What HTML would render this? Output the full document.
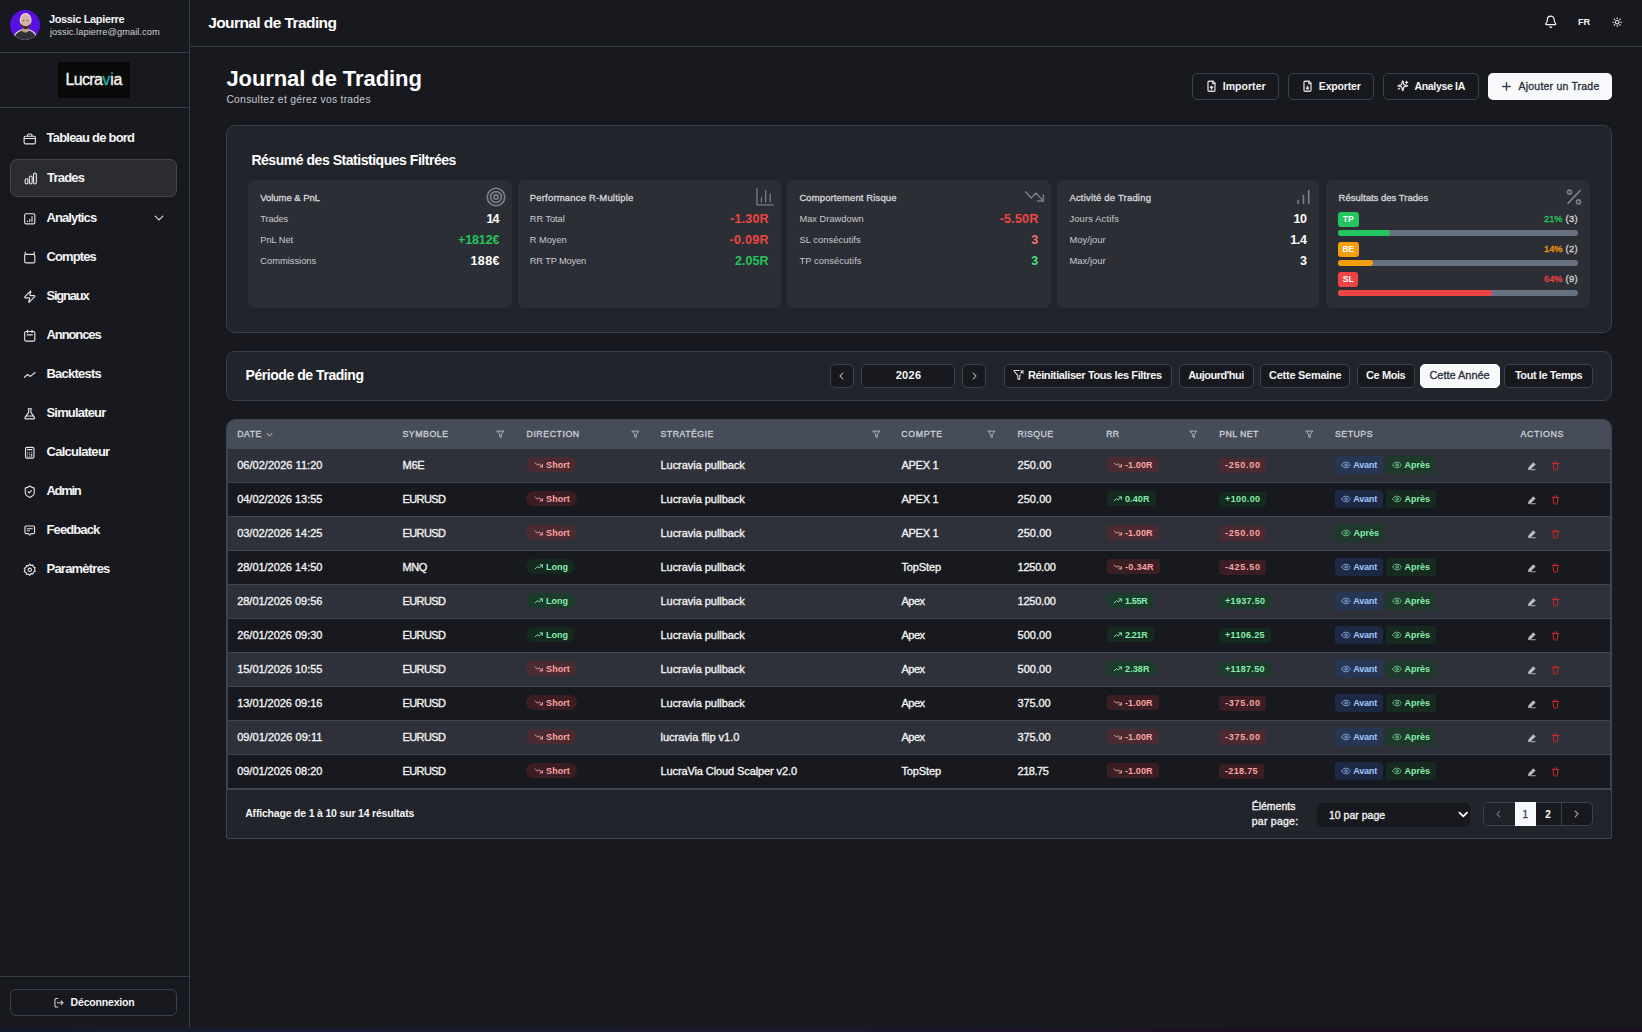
<!DOCTYPE html>
<html lang="fr"><head><meta charset="utf-8"><title>Journal de Trading</title>
<style>
*{box-sizing:border-box;margin:0;padding:0}
html,body{width:1642px;height:1032px;overflow:hidden}
body{background:linear-gradient(90deg,#141a2e 0%,#171a30 20%,#1b182d 50%,#1d0f22 78%,#1c0e20 100%);font-family:"Liberation Sans",sans-serif;color:#fff;position:relative}
.win{position:absolute;left:0;top:0;width:1642px;height:1028px;background:#18191e;overflow:hidden;border-bottom-left-radius:6px}
.abs{position:absolute;white-space:nowrap}
svg.abs{overflow:visible}
</style></head><body><div class="win">
<div class="abs" style="left:189px;top:0px;width:1px;height:1028px;background:#363c48"></div>
<div class="abs" style="left:0px;top:52px;width:189px;height:1px;background:#363c48"></div>
<div class="abs" style="left:0px;top:107px;width:189px;height:1px;background:#363c48"></div>
<div class="abs" style="left:0px;top:976px;width:189px;height:1px;background:#363c48"></div>
<svg class="abs" style="left:10px;top:10px" width="30" height="30" viewBox="0 0 30 30">
<defs><clipPath id="av"><circle cx="15" cy="15" r="15"/></clipPath></defs>
<g clip-path="url(#av)">
<rect width="30" height="30" fill="#5a0fe2"/>
<path d="M1 32 Q3 22.5 11 19.5 L20 19.5 Q27.5 22.5 29.5 32 Z" fill="#f2eef6"/>
<path d="M2 32 Q4 23.5 11.5 20.5 L19.5 20.5 Q26.5 23.5 28.5 32 Z" fill="#323133"/>
<path d="M12.5 15 h6 v6.5 q-3 2 -6 0z" fill="#c59e8a"/>
<ellipse cx="15.6" cy="10.6" rx="5.9" ry="7.6" fill="#f4ece6"/>
<ellipse cx="15.6" cy="10.9" rx="5.1" ry="6.9" fill="#d5b3a3"/>
<path d="M10.5 11.5 Q10.6 18.6 15.6 19.2 Q20.6 18.6 20.7 11.5 Q20 16 15.6 16.3 Q11.2 16 10.5 11.5Z" fill="#3a2a23"/>
<ellipse cx="13.6" cy="10.4" rx="0.9" ry="0.5" fill="#4a3a34"/><ellipse cx="17.6" cy="10.4" rx="0.9" ry="0.5" fill="#4a3a34"/>
</g></svg>
<div class="abs" style="left:49.00px;top:13.69px;font-size:11px;line-height:11px;font-weight:700;letter-spacing:-0.364px;color:#f4f4f5;">Jossic Lapierre</div>
<div class="abs" style="left:50.00px;top:27.73px;font-size:9.3px;line-height:9.3px;font-weight:400;letter-spacing:0.042px;color:#cfd0d4;">jossic.lapierre@gmail.com</div>
<div class="abs" style="left:58px;top:62px;width:72px;height:36px;background:#0a0a0b"></div>
<div class="abs" style="left:65.4px;top:72.3px;font-size:16px;line-height:16px;font-weight:400;-webkit-text-stroke:0.35px #f2f2f2;letter-spacing:-0.62px;color:#f2f2f2">Lucra<span style="color:#19b3a6;-webkit-text-stroke-color:#19b3a6">v</span>ıa</div>
<div class="abs" style="left:110.7px;top:71.7px;width:2.5px;height:2.5px;background:#19b3a6;border-radius:50%"></div>
<div class="abs" style="left:10px;top:159px;width:167px;height:38px;background:#2b2c31;border:1px solid #43454c;border-radius:7px"></div>
<div class="abs" style="left:46.50px;top:131.00px;font-size:13px;line-height:13px;font-weight:700;letter-spacing:-0.778px;color:#f4f4f5;">Tableau de bord</div>
<svg class="abs" style="left:23px;top:131.5px;" width="13.5" height="13.5" viewBox="0 0 24 24" fill="none" stroke="#e4e4e7" stroke-width="2" stroke-linecap="round" stroke-linejoin="round"><rect x="2" y="7.5" width="20" height="13.5" rx="2.5"/><path d="M8 7.5V6Q8 3.5 10.5 3.5h3Q16 3.5 16 6v1.5"/><path d="M2.3 11.5h19.4"/></svg>
<div class="abs" style="left:47.00px;top:171.00px;font-size:13px;line-height:13px;font-weight:700;letter-spacing:-0.777px;color:#f4f4f5;">Trades</div>
<svg class="abs" style="left:24px;top:171.5px;" width="13.5" height="13.5" viewBox="0 0 24 24" fill="none" stroke="#e4e4e7" stroke-width="2" stroke-linecap="round" stroke-linejoin="round"><path d="M2 18.5v-4a2.5 2.5 0 0 1 5 0v4a2.5 2.5 0 0 1-5 0z"/><path d="M9.5 18.5v-9a2.5 2.5 0 0 1 5 0v9a2.5 2.5 0 0 1-5 0z"/><path d="M17 18.5V4.5a2.5 2.5 0 0 1 5 0v14a2.5 2.5 0 0 1-5 0z"/></svg>
<div class="abs" style="left:46.50px;top:211.30px;font-size:13px;line-height:13px;font-weight:700;letter-spacing:-0.896px;color:#f4f4f5;">Analytics</div>
<svg class="abs" style="left:23px;top:211.8px;" width="13.5" height="13.5" viewBox="0 0 24 24" fill="none" stroke="#e4e4e7" stroke-width="2" stroke-linecap="round" stroke-linejoin="round"><rect x="3" y="3" width="18" height="18" rx="2.5"/><path d="M8 17v-1M12 17v-4M16 17V8"/></svg>
<div class="abs" style="left:46.50px;top:250.00px;font-size:13px;line-height:13px;font-weight:700;letter-spacing:-0.898px;color:#f4f4f5;">Comptes</div>
<svg class="abs" style="left:23px;top:250.5px;" width="13.5" height="13.5" viewBox="0 0 24 24" fill="none" stroke="#e4e4e7" stroke-width="2" stroke-linecap="round" stroke-linejoin="round"><rect x="3" y="6" width="18" height="15" rx="2.5"/><path d="M4 2v4M20 2v4"/></svg>
<div class="abs" style="left:46.50px;top:289.00px;font-size:13px;line-height:13px;font-weight:700;letter-spacing:-1.223px;color:#f4f4f5;">Signaux</div>
<svg class="abs" style="left:23px;top:289.5px;" width="13.5" height="13.5" viewBox="0 0 24 24" fill="none" stroke="#e4e4e7" stroke-width="2" stroke-linecap="round" stroke-linejoin="round"><path d="M4 14a1 1 0 0 1-.78-1.63l9.9-10.2a.5.5 0 0 1 .86.46l-1.92 6.02A1 1 0 0 0 13 10h7a1 1 0 0 1 .78 1.63l-9.9 10.2a.5.5 0 0 1-.86-.46l1.92-6.02A1 1 0 0 0 11 14z"/></svg>
<div class="abs" style="left:46.50px;top:328.00px;font-size:13px;line-height:13px;font-weight:700;letter-spacing:-1.087px;color:#f4f4f5;">Annonces</div>
<svg class="abs" style="left:23px;top:328.5px;" width="13.5" height="13.5" viewBox="0 0 24 24" fill="none" stroke="#e4e4e7" stroke-width="2" stroke-linecap="round" stroke-linejoin="round"><rect x="3" y="4.5" width="18" height="17" rx="2.5"/><path d="M8 2.5v4M16 2.5v4M7.5 10.5h9"/></svg>
<div class="abs" style="left:46.50px;top:367.00px;font-size:13px;line-height:13px;font-weight:700;letter-spacing:-0.775px;color:#f4f4f5;">Backtests</div>
<svg class="abs" style="left:23px;top:367.5px;" width="13.5" height="13.5" viewBox="0 0 24 24" fill="none" stroke="#e4e4e7" stroke-width="2" stroke-linecap="round" stroke-linejoin="round"><path d="M2.5 16.5l5.5-5 5 3.5 8.5-7"/></svg>
<div class="abs" style="left:46.50px;top:406.00px;font-size:13px;line-height:13px;font-weight:700;letter-spacing:-0.825px;color:#f4f4f5;">Simulateur</div>
<svg class="abs" style="left:23px;top:406.5px;" width="13.5" height="13.5" viewBox="0 0 24 24" fill="none" stroke="#e4e4e7" stroke-width="2" stroke-linecap="round" stroke-linejoin="round"><path d="M9 3h6M10 3v6.5L3.5 19a1.5 1.5 0 0 0 1.3 2.2h14.4a1.5 1.5 0 0 0 1.3-2.2L14 9.5V3"/><path d="M5.5 16h13"/></svg>
<div class="abs" style="left:46.50px;top:445.00px;font-size:13px;line-height:13px;font-weight:700;letter-spacing:-0.714px;color:#f4f4f5;">Calculateur</div>
<svg class="abs" style="left:23px;top:445.5px;" width="13.5" height="13.5" viewBox="0 0 24 24" fill="none" stroke="#e4e4e7" stroke-width="2" stroke-linecap="round" stroke-linejoin="round"><rect x="4.5" y="2.5" width="15" height="19" rx="2.5"/><path d="M8 6.5h8M8.5 11h.01M12 11h.01M15.5 11h.01M8.5 14.5h.01M12 14.5h.01M15.5 14.5h.01M8.5 18h.01M12 18h.01M15.5 18v-3.5"/></svg>
<div class="abs" style="left:46.50px;top:484.00px;font-size:13px;line-height:13px;font-weight:700;letter-spacing:-1.300px;color:#f4f4f5;">Admin</div>
<svg class="abs" style="left:23px;top:484.5px;" width="13.5" height="13.5" viewBox="0 0 24 24" fill="none" stroke="#e4e4e7" stroke-width="2" stroke-linecap="round" stroke-linejoin="round"><path d="M20 13c0 5-3.5 7.5-7.66 8.95a1 1 0 0 1-.67-.01C7.5 20.5 4 18 4 13V6a1 1 0 0 1 1-1c2 0 4.5-1.2 6.24-2.72a1.17 1.17 0 0 1 1.52 0C14.51 3.81 17 5 19 5a1 1 0 0 1 1 1z"/><path d="m9 12 2 2 4-4"/></svg>
<div class="abs" style="left:46.50px;top:523.00px;font-size:13px;line-height:13px;font-weight:700;letter-spacing:-0.892px;color:#f4f4f5;">Feedback</div>
<svg class="abs" style="left:23px;top:523.5px;" width="13.5" height="13.5" viewBox="0 0 24 24" fill="none" stroke="#e4e4e7" stroke-width="2" stroke-linecap="round" stroke-linejoin="round"><path d="M3.5 5.5a2 2 0 0 1 2-2h13a2 2 0 0 1 2 2v9.5a2 2 0 0 1-2 2h-4L12 20l-2.5-3h-4a2 2 0 0 1-2-2z"/><path d="M7.5 8.5h9M7.5 12h4"/></svg>
<div class="abs" style="left:46.50px;top:562.00px;font-size:13px;line-height:13px;font-weight:700;letter-spacing:-0.777px;color:#f4f4f5;">Paramètres</div>
<svg class="abs" style="left:23px;top:562.5px;" width="13.5" height="13.5" viewBox="0 0 24 24" fill="none" stroke="#e4e4e7" stroke-width="2" stroke-linecap="round" stroke-linejoin="round"><path d="M12 1.8l2.3 2.6 3.4-.6.9 3.3 3.2 1.4-1.4 3.1 1.4 3.1-3.2 1.4-.9 3.3-3.4-.6L12 22.2l-2.3-2.6-3.4.6-.9-3.3-3.2-1.4 1.4-3.1-1.4-3.1 3.2-1.4.9-3.3 3.4.6z"/><circle cx="12" cy="12" r="3"/></svg>
<svg class="abs" style="left:154px;top:214px;" width="10" height="8" viewBox="0 0 10 8" fill="none" stroke="#e4e4e7" stroke-width="1.1" stroke-linecap="round" stroke-linejoin="round"><path d="M1.2 2.2L5 5.8 8.8 2.2"/></svg>
<div class="abs" style="left:10px;top:989px;width:167px;height:27px;border:1px solid #3b4150;border-radius:6px"></div>
<svg class="abs" style="left:52.5px;top:996.5px;" width="11.5" height="11.5" viewBox="0 0 24 24" fill="none" stroke="#d4d4d8" stroke-width="2.2" stroke-linecap="round" stroke-linejoin="round"><path d="M10 3H6.5A2.5 2.5 0 0 0 4 5.5v13A2.5 2.5 0 0 0 6.5 21H10"/><path d="M9 12h12M17 8l4 4-4 4"/></svg>
<div class="abs" style="left:70.60px;top:997.21px;font-size:10.5px;line-height:10.5px;font-weight:700;letter-spacing:-0.181px;color:#f4f4f5;">Déconnexion</div>
<div class="abs" style="left:190px;top:46px;width:1452px;height:1px;background:#363c48"></div>
<div class="abs" style="left:208.20px;top:15.08px;font-size:15.5px;line-height:15.5px;font-weight:700;letter-spacing:-0.582px;color:#fff;">Journal de Trading</div>
<svg class="abs" style="left:1543.8px;top:15.2px;" width="13.5" height="13.5" viewBox="0 0 24 24" fill="none" stroke="#f4f4f5" stroke-width="2.1" stroke-linecap="round" stroke-linejoin="round"><path d="M10.268 21a2 2 0 0 0 3.464 0"/><path d="M3.262 15.326A1 1 0 0 0 4 17h16a1 1 0 0 0 .74-1.673C19.41 13.956 18 12.499 18 8A6 6 0 0 0 6 8c0 4.499-1.411 5.956-2.738 7.326"/></svg>
<div class="abs" style="left:1578.00px;top:17.81px;font-size:9.2px;line-height:9.2px;font-weight:700;letter-spacing:0.000px;color:#f4f4f5;">FR</div>
<svg class="abs" style="left:1611.6px;top:16.8px;" width="10.4" height="10.4" viewBox="0 0 24 24" fill="none" stroke="#e4e4e7" stroke-width="2.6" stroke-linecap="round" stroke-linejoin="round"><circle cx="12" cy="12" r="4"/><path d="M12 2v2M12 20v2M4.93 4.93l1.41 1.41M17.66 17.66l1.41 1.41M2 12h2M20 12h2M6.34 17.66l-1.41 1.41M19.07 4.93l-1.41 1.41"/></svg>
<div class="abs" style="left:226.40px;top:68.48px;font-size:22px;line-height:22px;font-weight:700;letter-spacing:-0.081px;color:#fff;">Journal de Trading</div>
<div class="abs" style="left:226.40px;top:95.28px;font-size:10.3px;line-height:10.3px;font-weight:400;letter-spacing:0.283px;color:#c9cacf;">Consultez et gérez vos trades</div>
<div class="abs" style="left:1192px;top:73px;width:87px;height:27px;border:1px solid #3a4150;border-radius:5px"></div>
<svg class="abs" style="left:1205.5px;top:80px;" width="11.0" height="12.5" viewBox="0 0 22 24" fill="none" stroke="#d4d4d8" stroke-width="2.6" stroke-linecap="round" stroke-linejoin="round"><path d="M14 2H6a2 2 0 0 0-2 2v16a2 2 0 0 0 2 2h10a2 2 0 0 0 2-2V6z"/><path d="M13.5 2v4.5H18"/><path d="M11 18v-6M8.5 14.5 11 12l2.5 2.5"/></svg>
<div class="abs" style="left:1222.80px;top:81.11px;font-size:10.5px;line-height:10.5px;font-weight:700;letter-spacing:0.028px;color:#f4f4f5;">Importer</div>
<div class="abs" style="left:1288px;top:73px;width:86px;height:27px;border:1px solid #3a4150;border-radius:5px"></div>
<svg class="abs" style="left:1301.5px;top:80px;" width="11.0" height="12.5" viewBox="0 0 22 24" fill="none" stroke="#d4d4d8" stroke-width="2.6" stroke-linecap="round" stroke-linejoin="round"><path d="M14 2H6a2 2 0 0 0-2 2v16a2 2 0 0 0 2 2h10a2 2 0 0 0 2-2V6z"/><path d="M13.5 2v4.5H18"/><path d="M11 12v6M8.5 15.5 11 18l2.5-2.5"/></svg>
<div class="abs" style="left:1318.80px;top:81.11px;font-size:10.5px;line-height:10.5px;font-weight:700;letter-spacing:-0.156px;color:#f4f4f5;">Exporter</div>
<div class="abs" style="left:1383px;top:73px;width:96px;height:27px;border:1px solid #3a4150;border-radius:5px"></div>
<svg class="abs" style="left:1396.5px;top:80px;" width="11.5" height="11.5" viewBox="0 0 24 24" fill="none" stroke="#e4e4e7" stroke-width="2.7" stroke-linecap="round" stroke-linejoin="round"><path d="M9.94 15.5A2 2 0 0 0 8.5 14.06l-6.14-1.58a.5.5 0 0 1 0-.96L8.5 9.94A2 2 0 0 0 9.94 8.5l1.58-6.14a.5.5 0 0 1 .96 0L14.06 8.5A2 2 0 0 0 15.5 9.94l6.14 1.58a.5.5 0 0 1 0 .96L15.5 14.06a2 2 0 0 0-1.44 1.44l-1.58 6.14a.5.5 0 0 1-.96 0z"/><path d="M20 3v4M22 5h-4M4 17v2M5 18H3"/></svg>
<div class="abs" style="left:1414.50px;top:81.11px;font-size:10.5px;line-height:10.5px;font-weight:700;letter-spacing:-0.323px;color:#f4f4f5;">Analyse IA</div>
<div class="abs" style="left:1488px;top:73px;width:124px;height:27px;background:#f8f9fb;border-radius:5px"></div>
<svg class="abs" style="left:1501.5px;top:82px;" width="9" height="9" viewBox="0 0 10 10" fill="none" stroke="#3a4150" stroke-width="1.5" stroke-linecap="round" stroke-linejoin="round"><path d="M5 .8v8.4M.8 5h8.4"/></svg>
<div class="abs" style="left:1518.60px;top:81.11px;font-size:10.5px;line-height:10.5px;font-weight:400;-webkit-text-stroke:0.32px #2a303c;letter-spacing:0.201px;color:#2a303c;">Ajouter un Trade</div>
<div class="abs" style="left:226px;top:125px;width:1386px;height:208px;background:#22242b;border:1px solid #393f4c;border-radius:9px"></div>
<div class="abs" style="left:251.40px;top:153.25px;font-size:14px;line-height:14px;font-weight:700;letter-spacing:-0.465px;color:#fff;">Résumé des Statistiques Filtrées</div>
<div class="abs" style="left:248.3px;top:180px;width:263.7px;height:127.8px;background:#2c2e35;border-radius:7px"></div>
<div class="abs" style="left:517.8px;top:180px;width:263.2px;height:127.8px;background:#2c2e35;border-radius:7px"></div>
<div class="abs" style="left:787.4px;top:180px;width:263.3px;height:127.8px;background:#2c2e35;border-radius:7px"></div>
<div class="abs" style="left:1057.4px;top:180px;width:262.0px;height:127.8px;background:#2c2e35;border-radius:7px"></div>
<div class="abs" style="left:1326.4px;top:180px;width:263.5px;height:127.8px;background:#2c2e35;border-radius:7px"></div>
<div class="abs" style="left:260.30px;top:192.96px;font-size:9.5px;line-height:9.5px;font-weight:400;-webkit-text-stroke:0.32px #d4d4d8;letter-spacing:-0.047px;color:#d4d4d8;">Volume &amp; PnL</div>
<div class="abs" style="left:260.30px;top:214.53px;font-size:9.3px;line-height:9.3px;font-weight:400;letter-spacing:-0.128px;color:#c8cad0;">Trades</div>
<div class="abs" style="left:486.40px;top:212.72px;font-size:12.5px;line-height:12.5px;font-weight:700;letter-spacing:-0.852px;color:#fff;">14</div>
<div class="abs" style="left:260.30px;top:236.13px;font-size:9.3px;line-height:9.3px;font-weight:400;letter-spacing:-0.068px;color:#c8cad0;">PnL Net</div>
<div class="abs" style="left:458.10px;top:234.32px;font-size:12.5px;line-height:12.5px;font-weight:700;letter-spacing:-0.141px;color:#22c55e;">+1812€</div>
<div class="abs" style="left:260.30px;top:256.93px;font-size:9.3px;line-height:9.3px;font-weight:400;letter-spacing:0.006px;color:#c8cad0;">Commissions</div>
<div class="abs" style="left:470.50px;top:255.12px;font-size:12.5px;line-height:12.5px;font-weight:700;letter-spacing:0.381px;color:#fff;">188€</div>
<svg class="abs" style="left:485.5px;top:186.5px;" width="20" height="20" viewBox="0 0 24 24" fill="none" stroke="#7b7e86" stroke-width="2.0" stroke-linecap="round" stroke-linejoin="round"><circle cx="12" cy="12" r="10.5"/><circle cx="12" cy="12" r="6.5"/><circle cx="12" cy="12" r="2.5"/></svg>
<div class="abs" style="left:529.80px;top:192.96px;font-size:9.5px;line-height:9.5px;font-weight:400;-webkit-text-stroke:0.32px #d4d4d8;letter-spacing:0.176px;color:#d4d4d8;">Performance R-Multiple</div>
<div class="abs" style="left:529.80px;top:214.53px;font-size:9.3px;line-height:9.3px;font-weight:400;letter-spacing:-0.083px;color:#c8cad0;">RR Total</div>
<div class="abs" style="left:730.30px;top:212.72px;font-size:12.5px;line-height:12.5px;font-weight:700;letter-spacing:0.142px;color:#ef4444;">-1.30R</div>
<div class="abs" style="left:529.80px;top:236.13px;font-size:9.3px;line-height:9.3px;font-weight:400;letter-spacing:-0.055px;color:#c8cad0;">R Moyen</div>
<div class="abs" style="left:729.60px;top:234.32px;font-size:12.5px;line-height:12.5px;font-weight:700;letter-spacing:0.282px;color:#ef4444;">-0.09R</div>
<div class="abs" style="left:529.80px;top:256.93px;font-size:9.3px;line-height:9.3px;font-weight:400;letter-spacing:-0.171px;color:#c8cad0;">RR TP Moyen</div>
<div class="abs" style="left:734.90px;top:255.12px;font-size:12.5px;line-height:12.5px;font-weight:700;letter-spacing:0.068px;color:#22c55e;">2.05R</div>
<svg class="abs" style="left:754.5px;top:186.5px;" width="19" height="19" viewBox="0 0 24 24" fill="none" stroke="#7b7e86" stroke-width="1.6" stroke-linecap="round" stroke-linejoin="round"><path d="M2.5 1.8v20.7h20.5"/><path d="M8.2 18.8v-5.3M13.5 18.8V4.5M19.2 18.8V8.6"/></svg>
<div class="abs" style="left:799.40px;top:192.96px;font-size:9.5px;line-height:9.5px;font-weight:400;-webkit-text-stroke:0.32px #d4d4d8;letter-spacing:0.113px;color:#d4d4d8;">Comportement Risque</div>
<div class="abs" style="left:799.40px;top:214.53px;font-size:9.3px;line-height:9.3px;font-weight:400;letter-spacing:0.010px;color:#c8cad0;">Max Drawdown</div>
<div class="abs" style="left:999.70px;top:212.72px;font-size:12.5px;line-height:12.5px;font-weight:700;letter-spacing:0.202px;color:#ef4444;">-5.50R</div>
<div class="abs" style="left:799.40px;top:236.13px;font-size:9.3px;line-height:9.3px;font-weight:400;letter-spacing:0.091px;color:#c8cad0;">SL consécutifs</div>
<div class="abs" style="left:1031.20px;top:234.32px;font-size:12.5px;line-height:12.5px;font-weight:700;letter-spacing:0.000px;color:#f87171;">3</div>
<div class="abs" style="left:799.40px;top:256.93px;font-size:9.3px;line-height:9.3px;font-weight:400;letter-spacing:0.098px;color:#c8cad0;">TP consécutifs</div>
<div class="abs" style="left:1031.20px;top:255.12px;font-size:12.5px;line-height:12.5px;font-weight:700;letter-spacing:0.000px;color:#4ade80;">3</div>
<svg class="abs" style="left:1024px;top:187px;" width="21" height="17" viewBox="0 0 26 20" fill="none" stroke="#7b7e86" stroke-width="1.7" stroke-linecap="round" stroke-linejoin="round"><path d="M2 5.4 9 13l5.7-6.05L24 16.8"/><path d="M16.7 16.8H24V9.4"/></svg>
<div class="abs" style="left:1069.40px;top:192.96px;font-size:9.5px;line-height:9.5px;font-weight:400;-webkit-text-stroke:0.32px #d4d4d8;letter-spacing:0.187px;color:#d4d4d8;">Activité de Trading</div>
<div class="abs" style="left:1069.40px;top:214.53px;font-size:9.3px;line-height:9.3px;font-weight:400;letter-spacing:0.173px;color:#c8cad0;">Jours Actifs</div>
<div class="abs" style="left:1293.50px;top:212.72px;font-size:12.5px;line-height:12.5px;font-weight:700;letter-spacing:-0.552px;color:#fff;">10</div>
<div class="abs" style="left:1069.40px;top:236.13px;font-size:9.3px;line-height:9.3px;font-weight:400;letter-spacing:0.092px;color:#c8cad0;">Moy/jour</div>
<div class="abs" style="left:1290.20px;top:234.32px;font-size:12.5px;line-height:12.5px;font-weight:700;letter-spacing:-0.362px;color:#fff;">1.4</div>
<div class="abs" style="left:1069.40px;top:256.93px;font-size:9.3px;line-height:9.3px;font-weight:400;letter-spacing:0.092px;color:#c8cad0;">Max/jour</div>
<div class="abs" style="left:1299.90px;top:255.12px;font-size:12.5px;line-height:12.5px;font-weight:700;letter-spacing:0.000px;color:#fff;">3</div>
<svg class="abs" style="left:1296px;top:187.5px;" width="15" height="18" viewBox="0 0 15 18" fill="none" stroke="#7b7e86" stroke-width="1.7" stroke-linecap="round" stroke-linejoin="round"><path d="M2.1 15.3v-2.5M7.4 15.3V7.6M12.7 15.3V2.5"/></svg>
<div class="abs" style="left:1338.60px;top:192.96px;font-size:9.5px;line-height:9.5px;font-weight:400;-webkit-text-stroke:0.32px #d4d4d8;letter-spacing:0.018px;color:#d4d4d8;">Résultats des Trades</div>
<svg class="abs" style="left:1564.5px;top:187.5px;" width="18" height="18" viewBox="0 0 24 24" fill="none" stroke="#7b7e86" stroke-width="2.2" stroke-linecap="round" stroke-linejoin="round"><path d="M20 3.5 4 20.5"/><circle cx="6" cy="5.5" r="2.6"/><circle cx="18" cy="18.5" r="2.6"/></svg>
<div class="abs" style="left:1338px;top:212px;width:20.9px;height:14.7px;background:#22c55e;border-radius:3px"></div>
<div class="abs" style="left:1342.85px;top:215.10px;font-size:8.5px;line-height:8.5px;font-weight:700;letter-spacing:0.000px;color:#fff;">TP</div>
<div class="abs" style="left:1544.00px;top:214.73px;font-size:9.3px;line-height:9.3px;font-weight:400;-webkit-text-stroke:0.32px #22c55e;letter-spacing:-0.020px;color:#22c55e;">21%</div>
<div class="abs" style="left:1565.40px;top:214.73px;font-size:9.3px;line-height:9.3px;font-weight:400;-webkit-text-stroke:0.32px #d4d4d8;letter-spacing:0.467px;color:#d4d4d8;">(3)</div>
<div class="abs" style="left:1338px;top:229.8px;width:240px;height:6.2px;background:#677180;border-radius:3.1px"></div>
<div class="abs" style="left:1338px;top:229.8px;width:52px;height:6.2px;background:#22c55e;border-radius:3.1px"></div>
<div class="abs" style="left:1338px;top:242.2px;width:20.9px;height:14.7px;background:#f59e0b;border-radius:3px"></div>
<div class="abs" style="left:1342.38px;top:245.30px;font-size:8.5px;line-height:8.5px;font-weight:700;letter-spacing:0.000px;color:#fff;">BE</div>
<div class="abs" style="left:1544.00px;top:244.93px;font-size:9.3px;line-height:9.3px;font-weight:400;-webkit-text-stroke:0.32px #f59e0b;letter-spacing:-0.020px;color:#f59e0b;">14%</div>
<div class="abs" style="left:1565.40px;top:244.93px;font-size:9.3px;line-height:9.3px;font-weight:400;-webkit-text-stroke:0.32px #d4d4d8;letter-spacing:0.467px;color:#d4d4d8;">(2)</div>
<div class="abs" style="left:1338px;top:260.0px;width:240px;height:6.2px;background:#677180;border-radius:3.1px"></div>
<div class="abs" style="left:1338px;top:260.0px;width:35px;height:6.2px;background:#f59e0b;border-radius:3.1px"></div>
<div class="abs" style="left:1338px;top:272px;width:20.1px;height:14.7px;background:#ef4444;border-radius:3px"></div>
<div class="abs" style="left:1342.72px;top:275.10px;font-size:8.5px;line-height:8.5px;font-weight:700;letter-spacing:0.000px;color:#fff;">SL</div>
<div class="abs" style="left:1544.00px;top:274.73px;font-size:9.3px;line-height:9.3px;font-weight:400;-webkit-text-stroke:0.32px #ef4444;letter-spacing:-0.020px;color:#ef4444;">64%</div>
<div class="abs" style="left:1565.40px;top:274.73px;font-size:9.3px;line-height:9.3px;font-weight:400;-webkit-text-stroke:0.32px #d4d4d8;letter-spacing:0.467px;color:#d4d4d8;">(9)</div>
<div class="abs" style="left:1338px;top:289.8px;width:240px;height:6.2px;background:#677180;border-radius:3.1px"></div>
<div class="abs" style="left:1338px;top:289.8px;width:154.1px;height:6.2px;background:#ef4444;border-radius:3.1px"></div>
<div class="abs" style="left:226px;top:351px;width:1386px;height:50px;background:#22242b;border:1px solid #393f4c;border-radius:9px"></div>
<div class="abs" style="left:245.60px;top:368.15px;font-size:14px;line-height:14px;font-weight:700;letter-spacing:-0.452px;color:#fff;">Période de Trading</div>
<div class="abs" style="left:830.4px;top:364px;width:23.6px;height:23.5px;background:#18191e;border:1px solid #3a4150;border-radius:5px"></div>
<svg class="abs" style="left:838px;top:372px;" width="7" height="8" viewBox="0 0 7 8" fill="none" stroke="#a1a1aa" stroke-width="1.1" stroke-linecap="round" stroke-linejoin="round"><path d="M4.8 1.2 2 4l2.8 2.8"/></svg>
<div class="abs" style="left:860.5px;top:364px;width:94.9px;height:23.5px;background:#18191e;border:1px solid #3a4150;border-radius:5px"></div>
<div class="abs" style="left:895.65px;top:369.99px;font-size:11px;line-height:11px;font-weight:700;letter-spacing:0.316px;color:#f4f4f5;">2026</div>
<div class="abs" style="left:962.4px;top:364px;width:23.3px;height:23.5px;background:#18191e;border:1px solid #3a4150;border-radius:5px"></div>
<svg class="abs" style="left:970.5px;top:372px;" width="7" height="8" viewBox="0 0 7 8" fill="none" stroke="#a1a1aa" stroke-width="1.1" stroke-linecap="round" stroke-linejoin="round"><path d="M2.2 1.2 5 4 2.2 6.8"/></svg>
<div class="abs" style="left:1004px;top:364px;width:168px;height:23.5px;background:#18191e;border:1px solid #3a4150;border-radius:5px"></div>
<div class="abs" style="left:1027.90px;top:369.99px;font-size:11px;line-height:11px;font-weight:700;letter-spacing:-0.385px;color:#f4f4f5;">Réinitialiser Tous les Filtres</div>
<div class="abs" style="left:1178.6px;top:364px;width:75.0px;height:23.5px;background:#18191e;border:1px solid #3a4150;border-radius:5px"></div>
<div class="abs" style="left:1188.20px;top:369.99px;font-size:11px;line-height:11px;font-weight:700;letter-spacing:-0.521px;color:#f4f4f5;">Aujourd'hui</div>
<div class="abs" style="left:1259.8px;top:364px;width:90.5px;height:23.5px;background:#18191e;border:1px solid #3a4150;border-radius:5px"></div>
<div class="abs" style="left:1269.10px;top:369.99px;font-size:11px;line-height:11px;font-weight:700;letter-spacing:-0.274px;color:#f4f4f5;">Cette Semaine</div>
<div class="abs" style="left:1356.8px;top:364px;width:58.4px;height:23.5px;background:#18191e;border:1px solid #3a4150;border-radius:5px"></div>
<div class="abs" style="left:1366.00px;top:369.99px;font-size:11px;line-height:11px;font-weight:700;letter-spacing:-0.409px;color:#f4f4f5;">Ce Mois</div>
<div class="abs" style="left:1420px;top:364px;width:79.6px;height:23.5px;background:#f8f9fb;border:1px solid #f8f9fb;border-radius:5px"></div>
<div class="abs" style="left:1429.40px;top:369.99px;font-size:11px;line-height:11px;font-weight:400;-webkit-text-stroke:0.32px #2a303c;letter-spacing:-0.024px;color:#2a303c;">Cette Année</div>
<div class="abs" style="left:1504.4px;top:364px;width:88.2px;height:23.5px;background:#18191e;border:1px solid #3a4150;border-radius:5px"></div>
<div class="abs" style="left:1514.90px;top:369.99px;font-size:11px;line-height:11px;font-weight:700;letter-spacing:-0.426px;color:#f4f4f5;">Tout le Temps</div>
<svg class="abs" style="left:1013.2px;top:369.2px;" width="11.5" height="11.5" viewBox="0 0 24 24" fill="none" stroke="#e4e4e7" stroke-width="2.2" stroke-linecap="round" stroke-linejoin="round"><path d="M12.531 3H3a1 1 0 0 0-.742 1.67l7.225 7.989A2 2 0 0 1 10 14v6a1 1 0 0 0 .553.895l2 1A1 1 0 0 0 14 21v-7a2 2 0 0 1 .517-1.341l.427-.473"/><path d="m16.5 3.5 5 5"/><path d="m21.5 3.5-5 5"/></svg>
<div class="abs" style="left:226px;top:419px;width:1386px;height:420px;background:#22242b;border:1px solid #3d4452;border-radius:9px 9px 2px 2px;overflow:hidden"></div>
<div class="abs" style="left:227px;top:420px;width:1384px;height:29.5px;background:#474d58;border-radius:8px 8px 0 0"></div>
<div class="abs" style="left:237.20px;top:429.65px;font-size:8.8px;line-height:8.8px;font-weight:400;-webkit-text-stroke:0.32px #caced5;letter-spacing:0.453px;color:#caced5;">DATE</div>
<div class="abs" style="left:402.50px;top:429.65px;font-size:8.8px;line-height:8.8px;font-weight:400;-webkit-text-stroke:0.32px #caced5;letter-spacing:0.506px;color:#caced5;">SYMBOLE</div>
<svg class="abs" style="left:496.2px;top:429.8px;" width="9" height="9" viewBox="0 0 24 24" fill="none" stroke="#c4c8cf" stroke-width="2.2" stroke-linecap="round" stroke-linejoin="round"><path d="M3 3h18l-7 8.5V20l-4-2v-6.5z"/></svg>
<div class="abs" style="left:526.50px;top:429.65px;font-size:8.8px;line-height:8.8px;font-weight:400;-webkit-text-stroke:0.32px #caced5;letter-spacing:0.534px;color:#caced5;">DIRECTION</div>
<svg class="abs" style="left:631.2px;top:429.8px;" width="9" height="9" viewBox="0 0 24 24" fill="none" stroke="#c4c8cf" stroke-width="2.2" stroke-linecap="round" stroke-linejoin="round"><path d="M3 3h18l-7 8.5V20l-4-2v-6.5z"/></svg>
<div class="abs" style="left:660.50px;top:429.65px;font-size:8.8px;line-height:8.8px;font-weight:400;-webkit-text-stroke:0.32px #caced5;letter-spacing:0.458px;color:#caced5;">STRATÉGIE</div>
<svg class="abs" style="left:872.2px;top:429.8px;" width="9" height="9" viewBox="0 0 24 24" fill="none" stroke="#c4c8cf" stroke-width="2.2" stroke-linecap="round" stroke-linejoin="round"><path d="M3 3h18l-7 8.5V20l-4-2v-6.5z"/></svg>
<div class="abs" style="left:901.20px;top:429.65px;font-size:8.8px;line-height:8.8px;font-weight:400;-webkit-text-stroke:0.32px #caced5;letter-spacing:0.647px;color:#caced5;">COMPTE</div>
<svg class="abs" style="left:987.4px;top:429.8px;" width="9" height="9" viewBox="0 0 24 24" fill="none" stroke="#c4c8cf" stroke-width="2.2" stroke-linecap="round" stroke-linejoin="round"><path d="M3 3h18l-7 8.5V20l-4-2v-6.5z"/></svg>
<div class="abs" style="left:1017.50px;top:429.65px;font-size:8.8px;line-height:8.8px;font-weight:400;-webkit-text-stroke:0.32px #caced5;letter-spacing:0.388px;color:#caced5;">RISQUE</div>
<div class="abs" style="left:1106.30px;top:429.65px;font-size:8.8px;line-height:8.8px;font-weight:400;-webkit-text-stroke:0.32px #caced5;letter-spacing:0.047px;color:#caced5;">RR</div>
<svg class="abs" style="left:1189.0px;top:429.8px;" width="9" height="9" viewBox="0 0 24 24" fill="none" stroke="#c4c8cf" stroke-width="2.2" stroke-linecap="round" stroke-linejoin="round"><path d="M3 3h18l-7 8.5V20l-4-2v-6.5z"/></svg>
<div class="abs" style="left:1219.20px;top:429.65px;font-size:8.8px;line-height:8.8px;font-weight:400;-webkit-text-stroke:0.32px #caced5;letter-spacing:0.404px;color:#caced5;">PNL NET</div>
<svg class="abs" style="left:1305.3px;top:429.8px;" width="9" height="9" viewBox="0 0 24 24" fill="none" stroke="#c4c8cf" stroke-width="2.2" stroke-linecap="round" stroke-linejoin="round"><path d="M3 3h18l-7 8.5V20l-4-2v-6.5z"/></svg>
<div class="abs" style="left:1335.00px;top:429.65px;font-size:8.8px;line-height:8.8px;font-weight:400;-webkit-text-stroke:0.32px #caced5;letter-spacing:0.474px;color:#caced5;">SETUPS</div>
<div class="abs" style="left:1520.60px;top:429.65px;font-size:8.8px;line-height:8.8px;font-weight:400;-webkit-text-stroke:0.32px #caced5;letter-spacing:0.594px;color:#caced5;">ACTIONS</div>
<svg class="abs" style="left:265.8px;top:431.8px;" width="7" height="6" viewBox="0 0 7 6" fill="none" stroke="#c4c8cf" stroke-width="1" stroke-linecap="round" stroke-linejoin="round"><path d="M1 1.3 3.5 4.1 6 1.3"/></svg>
<div class="abs" style="left:227px;top:448.5px;width:1384px;height:34px;background:#2e3139"></div>
<div class="abs" style="left:227px;top:481.5px;width:1384px;height:1px;background:#3d4452"></div>
<div class="abs" style="left:237.20px;top:459.99px;font-size:11px;line-height:11px;font-weight:400;-webkit-text-stroke:0.32px #f4f4f5;letter-spacing:0.026px;color:#f4f4f5;">06/02/2026 11:20</div>
<div class="abs" style="left:402.50px;top:459.99px;font-size:11px;line-height:11px;font-weight:400;-webkit-text-stroke:0.32px #f4f4f5;letter-spacing:-0.240px;color:#f4f4f5;">M6E</div>
<div class="abs" style="left:526.1px;top:457.1px;width:50.7px;height:15px;background:#4a2b31;border-radius:8px"></div>
<svg class="abs" style="left:533.8px;top:461.1px;" width="9.5" height="7" viewBox="0 0 11 9" fill="none" stroke="#fca5a5" stroke-width="1.2" stroke-linecap="round" stroke-linejoin="round"><path d="M1 2.5l3 3 2-2 4 3.8"/><path d="M7 7.6h3.2V4.4"/></svg>
<div class="abs" style="left:546.10px;top:460.58px;font-size:9px;line-height:9px;font-weight:700;letter-spacing:0.050px;color:#fca5a5;">Short</div>
<div class="abs" style="left:660.50px;top:459.99px;font-size:11px;line-height:11px;font-weight:400;-webkit-text-stroke:0.32px #f4f4f5;letter-spacing:-0.043px;color:#f4f4f5;">Lucravia pullback</div>
<div class="abs" style="left:901.50px;top:459.99px;font-size:11px;line-height:11px;font-weight:400;-webkit-text-stroke:0.32px #f4f4f5;letter-spacing:-0.281px;color:#f4f4f5;">APEX 1</div>
<div class="abs" style="left:1017.50px;top:459.99px;font-size:11px;line-height:11px;font-weight:400;-webkit-text-stroke:0.32px #f4f4f5;letter-spacing:0.055px;color:#f4f4f5;">250.00</div>
<div class="abs" style="left:1107px;top:457.1px;width:52px;height:14.8px;background:#4a2b31;border-radius:3px"></div>
<div class="abs" style="left:1125.00px;top:460.58px;font-size:9px;line-height:9px;font-weight:700;letter-spacing:0.097px;color:#fca5a5;">-1.00R</div>
<svg class="abs" style="left:1113px;top:461.1px;" width="9.5" height="7" viewBox="0 0 11 9" fill="none" stroke="#fca5a5" stroke-width="1.2" stroke-linecap="round" stroke-linejoin="round"><path d="M1 2.5l3 3 2-2 4 3.8"/><path d="M7 7.6h3.2V4.4"/></svg>
<div class="abs" style="left:1219.2px;top:457.9px;width:47.1px;height:14.8px;background:#4a2b31;border-radius:3px"></div>
<div class="abs" style="left:1225.00px;top:461.08px;font-size:9px;line-height:9px;font-weight:700;letter-spacing:0.763px;color:#fca5a5;">-250.00</div>
<div class="abs" style="left:1335.2px;top:456.3px;width:47.7px;height:17.3px;background:#283656;border-radius:3px"></div>
<svg class="abs" style="left:1340.6000000000001px;top:459.9px;" width="10" height="10" viewBox="0 0 24 24" fill="none" stroke="#9dbdf5" stroke-width="1.75" stroke-linecap="round" stroke-linejoin="round"><path d="M2.06 12.35a1 1 0 0 1 0-.7 10.75 10.75 0 0 1 19.88 0 1 1 0 0 1 0 .7 10.75 10.75 0 0 1-19.88 0"/><circle cx="12" cy="12" r="3"/></svg>
<div class="abs" style="left:1353.20px;top:460.78px;font-size:9px;line-height:9px;font-weight:700;letter-spacing:-0.168px;color:#a3c8fb;">Avant</div>
<div class="abs" style="left:1386.2px;top:456.3px;width:49.5px;height:17.3px;background:#20392d;border-radius:3px"></div>
<svg class="abs" style="left:1391.6000000000001px;top:459.9px;" width="10" height="10" viewBox="0 0 24 24" fill="none" stroke="#80e0a2" stroke-width="1.75" stroke-linecap="round" stroke-linejoin="round"><path d="M2.06 12.35a1 1 0 0 1 0-.7 10.75 10.75 0 0 1 19.88 0 1 1 0 0 1 0 .7 10.75 10.75 0 0 1-19.88 0"/><circle cx="12" cy="12" r="3"/></svg>
<div class="abs" style="left:1404.60px;top:460.78px;font-size:9px;line-height:9px;font-weight:700;letter-spacing:-0.026px;color:#86efac;">Après</div>
<svg class="abs" style="left:1527px;top:461.5px;" width="9.5" height="8.5" viewBox="0 0 12 11" fill="none" stroke="#d4d4d8" stroke-width="1" stroke-linecap="round" stroke-linejoin="round"><path d="M8.4 1.3l1.9 1.9-5.9 5.9-2.6.7.7-2.6z" fill="#c4c4c8"/><path d="M4.5 10h6"/></svg>
<svg class="abs" style="left:1551px;top:460.8px;" width="9" height="10" viewBox="0 0 24 26" fill="none" stroke="#c92a2a" stroke-width="2.6" stroke-linecap="round" stroke-linejoin="round"><path d="M3 6.5h18"/><path d="M5.5 6.5l1.3 15.2A2 2 0 0 0 8.8 23.5h6.4a2 2 0 0 0 2-1.8L18.5 6.5"/><path d="M8.5 6.5V5a3.5 3.5 0 0 1 7 0v1.5"/></svg>
<div class="abs" style="left:227px;top:482.5px;width:1384px;height:34px;background:#18191e"></div>
<div class="abs" style="left:227px;top:515.5px;width:1384px;height:1px;background:#3d4452"></div>
<div class="abs" style="left:237.20px;top:493.99px;font-size:11px;line-height:11px;font-weight:400;-webkit-text-stroke:0.32px #f4f4f5;letter-spacing:-0.028px;color:#f4f4f5;">04/02/2026 13:55</div>
<div class="abs" style="left:402.50px;top:493.99px;font-size:11px;line-height:11px;font-weight:400;-webkit-text-stroke:0.32px #f4f4f5;letter-spacing:-0.601px;color:#f4f4f5;">EURUSD</div>
<div class="abs" style="left:526.1px;top:491.1px;width:50.7px;height:15px;background:#3a1e23;border-radius:8px"></div>
<svg class="abs" style="left:533.8px;top:495.1px;" width="9.5" height="7" viewBox="0 0 11 9" fill="none" stroke="#fca5a5" stroke-width="1.2" stroke-linecap="round" stroke-linejoin="round"><path d="M1 2.5l3 3 2-2 4 3.8"/><path d="M7 7.6h3.2V4.4"/></svg>
<div class="abs" style="left:546.10px;top:494.58px;font-size:9px;line-height:9px;font-weight:700;letter-spacing:0.050px;color:#fca5a5;">Short</div>
<div class="abs" style="left:660.50px;top:493.99px;font-size:11px;line-height:11px;font-weight:400;-webkit-text-stroke:0.32px #f4f4f5;letter-spacing:-0.043px;color:#f4f4f5;">Lucravia pullback</div>
<div class="abs" style="left:901.50px;top:493.99px;font-size:11px;line-height:11px;font-weight:400;-webkit-text-stroke:0.32px #f4f4f5;letter-spacing:-0.281px;color:#f4f4f5;">APEX 1</div>
<div class="abs" style="left:1017.50px;top:493.99px;font-size:11px;line-height:11px;font-weight:400;-webkit-text-stroke:0.32px #f4f4f5;letter-spacing:0.055px;color:#f4f4f5;">250.00</div>
<div class="abs" style="left:1107px;top:491.1px;width:48.9px;height:14.8px;background:#14291f;border-radius:3px"></div>
<div class="abs" style="left:1125.00px;top:494.58px;font-size:9px;line-height:9px;font-weight:700;letter-spacing:0.096px;color:#86efac;">0.40R</div>
<svg class="abs" style="left:1113px;top:495.1px;" width="9.5" height="7" viewBox="0 0 11 9" fill="none" stroke="#86efac" stroke-width="1.2" stroke-linecap="round" stroke-linejoin="round"><path d="M1 7.5l3-3 2 2 4-3.8"/><path d="M7 2.4h3.2v3.2"/></svg>
<div class="abs" style="left:1219.2px;top:491.9px;width:47.1px;height:14.8px;background:#14291f;border-radius:3px"></div>
<div class="abs" style="left:1225.00px;top:495.08px;font-size:9px;line-height:9px;font-weight:700;letter-spacing:0.387px;color:#86efac;">+100.00</div>
<div class="abs" style="left:1335.2px;top:490.3px;width:47.7px;height:17.3px;background:#1d2844;border-radius:3px"></div>
<svg class="abs" style="left:1340.6000000000001px;top:493.9px;" width="10" height="10" viewBox="0 0 24 24" fill="none" stroke="#9dbdf5" stroke-width="1.75" stroke-linecap="round" stroke-linejoin="round"><path d="M2.06 12.35a1 1 0 0 1 0-.7 10.75 10.75 0 0 1 19.88 0 1 1 0 0 1 0 .7 10.75 10.75 0 0 1-19.88 0"/><circle cx="12" cy="12" r="3"/></svg>
<div class="abs" style="left:1353.20px;top:494.78px;font-size:9px;line-height:9px;font-weight:700;letter-spacing:-0.168px;color:#a3c8fb;">Avant</div>
<div class="abs" style="left:1386.2px;top:490.3px;width:49.5px;height:17.3px;background:#172a20;border-radius:3px"></div>
<svg class="abs" style="left:1391.6000000000001px;top:493.9px;" width="10" height="10" viewBox="0 0 24 24" fill="none" stroke="#80e0a2" stroke-width="1.75" stroke-linecap="round" stroke-linejoin="round"><path d="M2.06 12.35a1 1 0 0 1 0-.7 10.75 10.75 0 0 1 19.88 0 1 1 0 0 1 0 .7 10.75 10.75 0 0 1-19.88 0"/><circle cx="12" cy="12" r="3"/></svg>
<div class="abs" style="left:1404.60px;top:494.78px;font-size:9px;line-height:9px;font-weight:700;letter-spacing:-0.026px;color:#86efac;">Après</div>
<svg class="abs" style="left:1527px;top:495.5px;" width="9.5" height="8.5" viewBox="0 0 12 11" fill="none" stroke="#d4d4d8" stroke-width="1" stroke-linecap="round" stroke-linejoin="round"><path d="M8.4 1.3l1.9 1.9-5.9 5.9-2.6.7.7-2.6z" fill="#c4c4c8"/><path d="M4.5 10h6"/></svg>
<svg class="abs" style="left:1551px;top:494.8px;" width="9" height="10" viewBox="0 0 24 26" fill="none" stroke="#c92a2a" stroke-width="2.6" stroke-linecap="round" stroke-linejoin="round"><path d="M3 6.5h18"/><path d="M5.5 6.5l1.3 15.2A2 2 0 0 0 8.8 23.5h6.4a2 2 0 0 0 2-1.8L18.5 6.5"/><path d="M8.5 6.5V5a3.5 3.5 0 0 1 7 0v1.5"/></svg>
<div class="abs" style="left:227px;top:516.5px;width:1384px;height:34px;background:#2e3139"></div>
<div class="abs" style="left:227px;top:549.5px;width:1384px;height:1px;background:#3d4452"></div>
<div class="abs" style="left:237.20px;top:527.99px;font-size:11px;line-height:11px;font-weight:400;-webkit-text-stroke:0.32px #f4f4f5;letter-spacing:-0.028px;color:#f4f4f5;">03/02/2026 14:25</div>
<div class="abs" style="left:402.50px;top:527.99px;font-size:11px;line-height:11px;font-weight:400;-webkit-text-stroke:0.32px #f4f4f5;letter-spacing:-0.601px;color:#f4f4f5;">EURUSD</div>
<div class="abs" style="left:526.1px;top:525.1px;width:50.7px;height:15px;background:#4a2b31;border-radius:8px"></div>
<svg class="abs" style="left:533.8px;top:529.1px;" width="9.5" height="7" viewBox="0 0 11 9" fill="none" stroke="#fca5a5" stroke-width="1.2" stroke-linecap="round" stroke-linejoin="round"><path d="M1 2.5l3 3 2-2 4 3.8"/><path d="M7 7.6h3.2V4.4"/></svg>
<div class="abs" style="left:546.10px;top:528.58px;font-size:9px;line-height:9px;font-weight:700;letter-spacing:0.050px;color:#fca5a5;">Short</div>
<div class="abs" style="left:660.50px;top:527.99px;font-size:11px;line-height:11px;font-weight:400;-webkit-text-stroke:0.32px #f4f4f5;letter-spacing:-0.043px;color:#f4f4f5;">Lucravia pullback</div>
<div class="abs" style="left:901.50px;top:527.99px;font-size:11px;line-height:11px;font-weight:400;-webkit-text-stroke:0.32px #f4f4f5;letter-spacing:-0.281px;color:#f4f4f5;">APEX 1</div>
<div class="abs" style="left:1017.50px;top:527.99px;font-size:11px;line-height:11px;font-weight:400;-webkit-text-stroke:0.32px #f4f4f5;letter-spacing:0.055px;color:#f4f4f5;">250.00</div>
<div class="abs" style="left:1107px;top:525.1px;width:52px;height:14.8px;background:#4a2b31;border-radius:3px"></div>
<div class="abs" style="left:1125.00px;top:528.58px;font-size:9px;line-height:9px;font-weight:700;letter-spacing:0.097px;color:#fca5a5;">-1.00R</div>
<svg class="abs" style="left:1113px;top:529.1px;" width="9.5" height="7" viewBox="0 0 11 9" fill="none" stroke="#fca5a5" stroke-width="1.2" stroke-linecap="round" stroke-linejoin="round"><path d="M1 2.5l3 3 2-2 4 3.8"/><path d="M7 7.6h3.2V4.4"/></svg>
<div class="abs" style="left:1219.2px;top:525.9px;width:47.1px;height:14.8px;background:#4a2b31;border-radius:3px"></div>
<div class="abs" style="left:1225.00px;top:529.08px;font-size:9px;line-height:9px;font-weight:700;letter-spacing:0.763px;color:#fca5a5;">-250.00</div>
<div class="abs" style="left:1335.2px;top:524.3px;width:48.7px;height:17.3px;background:#20392d;border-radius:3px"></div>
<svg class="abs" style="left:1340.6000000000001px;top:527.9px;" width="10" height="10" viewBox="0 0 24 24" fill="none" stroke="#80e0a2" stroke-width="1.75" stroke-linecap="round" stroke-linejoin="round"><path d="M2.06 12.35a1 1 0 0 1 0-.7 10.75 10.75 0 0 1 19.88 0 1 1 0 0 1 0 .7 10.75 10.75 0 0 1-19.88 0"/><circle cx="12" cy="12" r="3"/></svg>
<div class="abs" style="left:1353.60px;top:528.78px;font-size:9px;line-height:9px;font-weight:700;letter-spacing:-0.026px;color:#86efac;">Après</div>
<svg class="abs" style="left:1527px;top:529.5px;" width="9.5" height="8.5" viewBox="0 0 12 11" fill="none" stroke="#d4d4d8" stroke-width="1" stroke-linecap="round" stroke-linejoin="round"><path d="M8.4 1.3l1.9 1.9-5.9 5.9-2.6.7.7-2.6z" fill="#c4c4c8"/><path d="M4.5 10h6"/></svg>
<svg class="abs" style="left:1551px;top:528.8px;" width="9" height="10" viewBox="0 0 24 26" fill="none" stroke="#c92a2a" stroke-width="2.6" stroke-linecap="round" stroke-linejoin="round"><path d="M3 6.5h18"/><path d="M5.5 6.5l1.3 15.2A2 2 0 0 0 8.8 23.5h6.4a2 2 0 0 0 2-1.8L18.5 6.5"/><path d="M8.5 6.5V5a3.5 3.5 0 0 1 7 0v1.5"/></svg>
<div class="abs" style="left:227px;top:550.5px;width:1384px;height:34px;background:#18191e"></div>
<div class="abs" style="left:227px;top:583.5px;width:1384px;height:1px;background:#3d4452"></div>
<div class="abs" style="left:237.20px;top:561.99px;font-size:11px;line-height:11px;font-weight:400;-webkit-text-stroke:0.32px #f4f4f5;letter-spacing:-0.028px;color:#f4f4f5;">28/01/2026 14:50</div>
<div class="abs" style="left:402.50px;top:561.99px;font-size:11px;line-height:11px;font-weight:400;-webkit-text-stroke:0.32px #f4f4f5;letter-spacing:-0.453px;color:#f4f4f5;">MNQ</div>
<div class="abs" style="left:526.1px;top:559.1px;width:48.6px;height:15px;background:#14291f;border-radius:8px"></div>
<svg class="abs" style="left:533.8px;top:563.1px;" width="9.5" height="7" viewBox="0 0 11 9" fill="none" stroke="#86efac" stroke-width="1.2" stroke-linecap="round" stroke-linejoin="round"><path d="M1 7.5l3-3 2 2 4-3.8"/><path d="M7 2.4h3.2v3.2"/></svg>
<div class="abs" style="left:546.10px;top:562.58px;font-size:9px;line-height:9px;font-weight:700;letter-spacing:0.000px;color:#86efac;">Long</div>
<div class="abs" style="left:660.50px;top:561.99px;font-size:11px;line-height:11px;font-weight:400;-webkit-text-stroke:0.32px #f4f4f5;letter-spacing:-0.043px;color:#f4f4f5;">Lucravia pullback</div>
<div class="abs" style="left:901.50px;top:561.99px;font-size:11px;line-height:11px;font-weight:400;-webkit-text-stroke:0.32px #f4f4f5;letter-spacing:-0.141px;color:#f4f4f5;">TopStep</div>
<div class="abs" style="left:1017.50px;top:561.99px;font-size:11px;line-height:11px;font-weight:400;-webkit-text-stroke:0.32px #f4f4f5;letter-spacing:-0.224px;color:#f4f4f5;">1250.00</div>
<div class="abs" style="left:1107px;top:559.1px;width:53px;height:14.8px;background:#3a1e23;border-radius:3px"></div>
<div class="abs" style="left:1125.00px;top:562.58px;font-size:9px;line-height:9px;font-weight:700;letter-spacing:0.297px;color:#fca5a5;">-0.34R</div>
<svg class="abs" style="left:1113px;top:563.1px;" width="9.5" height="7" viewBox="0 0 11 9" fill="none" stroke="#fca5a5" stroke-width="1.2" stroke-linecap="round" stroke-linejoin="round"><path d="M1 2.5l3 3 2-2 4 3.8"/><path d="M7 7.6h3.2V4.4"/></svg>
<div class="abs" style="left:1219.2px;top:559.9px;width:47px;height:14.8px;background:#3a1e23;border-radius:3px"></div>
<div class="abs" style="left:1225.00px;top:563.08px;font-size:9px;line-height:9px;font-weight:700;letter-spacing:0.747px;color:#fca5a5;">-425.50</div>
<div class="abs" style="left:1335.2px;top:558.3px;width:47.7px;height:17.3px;background:#1d2844;border-radius:3px"></div>
<svg class="abs" style="left:1340.6000000000001px;top:561.9px;" width="10" height="10" viewBox="0 0 24 24" fill="none" stroke="#9dbdf5" stroke-width="1.75" stroke-linecap="round" stroke-linejoin="round"><path d="M2.06 12.35a1 1 0 0 1 0-.7 10.75 10.75 0 0 1 19.88 0 1 1 0 0 1 0 .7 10.75 10.75 0 0 1-19.88 0"/><circle cx="12" cy="12" r="3"/></svg>
<div class="abs" style="left:1353.20px;top:562.78px;font-size:9px;line-height:9px;font-weight:700;letter-spacing:-0.168px;color:#a3c8fb;">Avant</div>
<div class="abs" style="left:1386.2px;top:558.3px;width:49.5px;height:17.3px;background:#172a20;border-radius:3px"></div>
<svg class="abs" style="left:1391.6000000000001px;top:561.9px;" width="10" height="10" viewBox="0 0 24 24" fill="none" stroke="#80e0a2" stroke-width="1.75" stroke-linecap="round" stroke-linejoin="round"><path d="M2.06 12.35a1 1 0 0 1 0-.7 10.75 10.75 0 0 1 19.88 0 1 1 0 0 1 0 .7 10.75 10.75 0 0 1-19.88 0"/><circle cx="12" cy="12" r="3"/></svg>
<div class="abs" style="left:1404.60px;top:562.78px;font-size:9px;line-height:9px;font-weight:700;letter-spacing:-0.026px;color:#86efac;">Après</div>
<svg class="abs" style="left:1527px;top:563.5px;" width="9.5" height="8.5" viewBox="0 0 12 11" fill="none" stroke="#d4d4d8" stroke-width="1" stroke-linecap="round" stroke-linejoin="round"><path d="M8.4 1.3l1.9 1.9-5.9 5.9-2.6.7.7-2.6z" fill="#c4c4c8"/><path d="M4.5 10h6"/></svg>
<svg class="abs" style="left:1551px;top:562.8px;" width="9" height="10" viewBox="0 0 24 26" fill="none" stroke="#c92a2a" stroke-width="2.6" stroke-linecap="round" stroke-linejoin="round"><path d="M3 6.5h18"/><path d="M5.5 6.5l1.3 15.2A2 2 0 0 0 8.8 23.5h6.4a2 2 0 0 0 2-1.8L18.5 6.5"/><path d="M8.5 6.5V5a3.5 3.5 0 0 1 7 0v1.5"/></svg>
<div class="abs" style="left:227px;top:584.5px;width:1384px;height:34px;background:#2e3139"></div>
<div class="abs" style="left:227px;top:617.5px;width:1384px;height:1px;background:#3d4452"></div>
<div class="abs" style="left:237.20px;top:595.99px;font-size:11px;line-height:11px;font-weight:400;-webkit-text-stroke:0.32px #f4f4f5;letter-spacing:-0.028px;color:#f4f4f5;">28/01/2026 09:56</div>
<div class="abs" style="left:402.50px;top:595.99px;font-size:11px;line-height:11px;font-weight:400;-webkit-text-stroke:0.32px #f4f4f5;letter-spacing:-0.601px;color:#f4f4f5;">EURUSD</div>
<div class="abs" style="left:526.1px;top:593.1px;width:48.6px;height:15px;background:#1d3b2c;border-radius:8px"></div>
<svg class="abs" style="left:533.8px;top:597.1px;" width="9.5" height="7" viewBox="0 0 11 9" fill="none" stroke="#86efac" stroke-width="1.2" stroke-linecap="round" stroke-linejoin="round"><path d="M1 7.5l3-3 2 2 4-3.8"/><path d="M7 2.4h3.2v3.2"/></svg>
<div class="abs" style="left:546.10px;top:596.58px;font-size:9px;line-height:9px;font-weight:700;letter-spacing:0.000px;color:#86efac;">Long</div>
<div class="abs" style="left:660.50px;top:595.99px;font-size:11px;line-height:11px;font-weight:400;-webkit-text-stroke:0.32px #f4f4f5;letter-spacing:-0.043px;color:#f4f4f5;">Lucravia pullback</div>
<div class="abs" style="left:901.50px;top:595.99px;font-size:11px;line-height:11px;font-weight:400;-webkit-text-stroke:0.32px #f4f4f5;letter-spacing:-0.524px;color:#f4f4f5;">Apex</div>
<div class="abs" style="left:1017.50px;top:595.99px;font-size:11px;line-height:11px;font-weight:400;-webkit-text-stroke:0.32px #f4f4f5;letter-spacing:-0.224px;color:#f4f4f5;">1250.00</div>
<div class="abs" style="left:1107px;top:593.1px;width:47.2px;height:14.8px;background:#1d3b2c;border-radius:3px"></div>
<div class="abs" style="left:1125.00px;top:596.58px;font-size:9px;line-height:9px;font-weight:700;letter-spacing:-0.329px;color:#86efac;">1.55R</div>
<svg class="abs" style="left:1113px;top:597.1px;" width="9.5" height="7" viewBox="0 0 11 9" fill="none" stroke="#86efac" stroke-width="1.2" stroke-linecap="round" stroke-linejoin="round"><path d="M1 7.5l3-3 2 2 4-3.8"/><path d="M7 2.4h3.2v3.2"/></svg>
<div class="abs" style="left:1219.2px;top:593.9px;width:52px;height:14.8px;background:#1d3b2c;border-radius:3px"></div>
<div class="abs" style="left:1225.00px;top:597.08px;font-size:9px;line-height:9px;font-weight:700;letter-spacing:0.317px;color:#86efac;">+1937.50</div>
<div class="abs" style="left:1335.2px;top:592.3px;width:47.7px;height:17.3px;background:#283656;border-radius:3px"></div>
<svg class="abs" style="left:1340.6000000000001px;top:595.9px;" width="10" height="10" viewBox="0 0 24 24" fill="none" stroke="#9dbdf5" stroke-width="1.75" stroke-linecap="round" stroke-linejoin="round"><path d="M2.06 12.35a1 1 0 0 1 0-.7 10.75 10.75 0 0 1 19.88 0 1 1 0 0 1 0 .7 10.75 10.75 0 0 1-19.88 0"/><circle cx="12" cy="12" r="3"/></svg>
<div class="abs" style="left:1353.20px;top:596.78px;font-size:9px;line-height:9px;font-weight:700;letter-spacing:-0.168px;color:#a3c8fb;">Avant</div>
<div class="abs" style="left:1386.2px;top:592.3px;width:49.5px;height:17.3px;background:#20392d;border-radius:3px"></div>
<svg class="abs" style="left:1391.6000000000001px;top:595.9px;" width="10" height="10" viewBox="0 0 24 24" fill="none" stroke="#80e0a2" stroke-width="1.75" stroke-linecap="round" stroke-linejoin="round"><path d="M2.06 12.35a1 1 0 0 1 0-.7 10.75 10.75 0 0 1 19.88 0 1 1 0 0 1 0 .7 10.75 10.75 0 0 1-19.88 0"/><circle cx="12" cy="12" r="3"/></svg>
<div class="abs" style="left:1404.60px;top:596.78px;font-size:9px;line-height:9px;font-weight:700;letter-spacing:-0.026px;color:#86efac;">Après</div>
<svg class="abs" style="left:1527px;top:597.5px;" width="9.5" height="8.5" viewBox="0 0 12 11" fill="none" stroke="#d4d4d8" stroke-width="1" stroke-linecap="round" stroke-linejoin="round"><path d="M8.4 1.3l1.9 1.9-5.9 5.9-2.6.7.7-2.6z" fill="#c4c4c8"/><path d="M4.5 10h6"/></svg>
<svg class="abs" style="left:1551px;top:596.8px;" width="9" height="10" viewBox="0 0 24 26" fill="none" stroke="#c92a2a" stroke-width="2.6" stroke-linecap="round" stroke-linejoin="round"><path d="M3 6.5h18"/><path d="M5.5 6.5l1.3 15.2A2 2 0 0 0 8.8 23.5h6.4a2 2 0 0 0 2-1.8L18.5 6.5"/><path d="M8.5 6.5V5a3.5 3.5 0 0 1 7 0v1.5"/></svg>
<div class="abs" style="left:227px;top:618.5px;width:1384px;height:34px;background:#18191e"></div>
<div class="abs" style="left:227px;top:651.5px;width:1384px;height:1px;background:#3d4452"></div>
<div class="abs" style="left:237.20px;top:629.99px;font-size:11px;line-height:11px;font-weight:400;-webkit-text-stroke:0.32px #f4f4f5;letter-spacing:-0.028px;color:#f4f4f5;">26/01/2026 09:30</div>
<div class="abs" style="left:402.50px;top:629.99px;font-size:11px;line-height:11px;font-weight:400;-webkit-text-stroke:0.32px #f4f4f5;letter-spacing:-0.601px;color:#f4f4f5;">EURUSD</div>
<div class="abs" style="left:526.1px;top:627.1px;width:48.6px;height:15px;background:#14291f;border-radius:8px"></div>
<svg class="abs" style="left:533.8px;top:631.1px;" width="9.5" height="7" viewBox="0 0 11 9" fill="none" stroke="#86efac" stroke-width="1.2" stroke-linecap="round" stroke-linejoin="round"><path d="M1 7.5l3-3 2 2 4-3.8"/><path d="M7 2.4h3.2v3.2"/></svg>
<div class="abs" style="left:546.10px;top:630.58px;font-size:9px;line-height:9px;font-weight:700;letter-spacing:0.000px;color:#86efac;">Long</div>
<div class="abs" style="left:660.50px;top:629.99px;font-size:11px;line-height:11px;font-weight:400;-webkit-text-stroke:0.32px #f4f4f5;letter-spacing:-0.043px;color:#f4f4f5;">Lucravia pullback</div>
<div class="abs" style="left:901.50px;top:629.99px;font-size:11px;line-height:11px;font-weight:400;-webkit-text-stroke:0.32px #f4f4f5;letter-spacing:-0.524px;color:#f4f4f5;">Apex</div>
<div class="abs" style="left:1017.50px;top:629.99px;font-size:11px;line-height:11px;font-weight:400;-webkit-text-stroke:0.32px #f4f4f5;letter-spacing:0.035px;color:#f4f4f5;">500.00</div>
<div class="abs" style="left:1107px;top:627.1px;width:47.2px;height:14.8px;background:#14291f;border-radius:3px"></div>
<div class="abs" style="left:1125.00px;top:630.58px;font-size:9px;line-height:9px;font-weight:700;letter-spacing:-0.329px;color:#86efac;">2.21R</div>
<svg class="abs" style="left:1113px;top:631.1px;" width="9.5" height="7" viewBox="0 0 11 9" fill="none" stroke="#86efac" stroke-width="1.2" stroke-linecap="round" stroke-linejoin="round"><path d="M1 7.5l3-3 2 2 4-3.8"/><path d="M7 2.4h3.2v3.2"/></svg>
<div class="abs" style="left:1219.2px;top:627.9px;width:51.5px;height:14.8px;background:#14291f;border-radius:3px"></div>
<div class="abs" style="left:1225.00px;top:631.08px;font-size:9px;line-height:9px;font-weight:700;letter-spacing:0.316px;color:#86efac;">+1106.25</div>
<div class="abs" style="left:1335.2px;top:626.3px;width:47.7px;height:17.3px;background:#1d2844;border-radius:3px"></div>
<svg class="abs" style="left:1340.6000000000001px;top:629.9px;" width="10" height="10" viewBox="0 0 24 24" fill="none" stroke="#9dbdf5" stroke-width="1.75" stroke-linecap="round" stroke-linejoin="round"><path d="M2.06 12.35a1 1 0 0 1 0-.7 10.75 10.75 0 0 1 19.88 0 1 1 0 0 1 0 .7 10.75 10.75 0 0 1-19.88 0"/><circle cx="12" cy="12" r="3"/></svg>
<div class="abs" style="left:1353.20px;top:630.78px;font-size:9px;line-height:9px;font-weight:700;letter-spacing:-0.168px;color:#a3c8fb;">Avant</div>
<div class="abs" style="left:1386.2px;top:626.3px;width:49.5px;height:17.3px;background:#172a20;border-radius:3px"></div>
<svg class="abs" style="left:1391.6000000000001px;top:629.9px;" width="10" height="10" viewBox="0 0 24 24" fill="none" stroke="#80e0a2" stroke-width="1.75" stroke-linecap="round" stroke-linejoin="round"><path d="M2.06 12.35a1 1 0 0 1 0-.7 10.75 10.75 0 0 1 19.88 0 1 1 0 0 1 0 .7 10.75 10.75 0 0 1-19.88 0"/><circle cx="12" cy="12" r="3"/></svg>
<div class="abs" style="left:1404.60px;top:630.78px;font-size:9px;line-height:9px;font-weight:700;letter-spacing:-0.026px;color:#86efac;">Après</div>
<svg class="abs" style="left:1527px;top:631.5px;" width="9.5" height="8.5" viewBox="0 0 12 11" fill="none" stroke="#d4d4d8" stroke-width="1" stroke-linecap="round" stroke-linejoin="round"><path d="M8.4 1.3l1.9 1.9-5.9 5.9-2.6.7.7-2.6z" fill="#c4c4c8"/><path d="M4.5 10h6"/></svg>
<svg class="abs" style="left:1551px;top:630.8px;" width="9" height="10" viewBox="0 0 24 26" fill="none" stroke="#c92a2a" stroke-width="2.6" stroke-linecap="round" stroke-linejoin="round"><path d="M3 6.5h18"/><path d="M5.5 6.5l1.3 15.2A2 2 0 0 0 8.8 23.5h6.4a2 2 0 0 0 2-1.8L18.5 6.5"/><path d="M8.5 6.5V5a3.5 3.5 0 0 1 7 0v1.5"/></svg>
<div class="abs" style="left:227px;top:652.5px;width:1384px;height:34px;background:#2e3139"></div>
<div class="abs" style="left:227px;top:685.5px;width:1384px;height:1px;background:#3d4452"></div>
<div class="abs" style="left:237.20px;top:663.99px;font-size:11px;line-height:11px;font-weight:400;-webkit-text-stroke:0.32px #f4f4f5;letter-spacing:-0.028px;color:#f4f4f5;">15/01/2026 10:55</div>
<div class="abs" style="left:402.50px;top:663.99px;font-size:11px;line-height:11px;font-weight:400;-webkit-text-stroke:0.32px #f4f4f5;letter-spacing:-0.601px;color:#f4f4f5;">EURUSD</div>
<div class="abs" style="left:526.1px;top:661.1px;width:50.7px;height:15px;background:#4a2b31;border-radius:8px"></div>
<svg class="abs" style="left:533.8px;top:665.1px;" width="9.5" height="7" viewBox="0 0 11 9" fill="none" stroke="#fca5a5" stroke-width="1.2" stroke-linecap="round" stroke-linejoin="round"><path d="M1 2.5l3 3 2-2 4 3.8"/><path d="M7 7.6h3.2V4.4"/></svg>
<div class="abs" style="left:546.10px;top:664.58px;font-size:9px;line-height:9px;font-weight:700;letter-spacing:0.050px;color:#fca5a5;">Short</div>
<div class="abs" style="left:660.50px;top:663.99px;font-size:11px;line-height:11px;font-weight:400;-webkit-text-stroke:0.32px #f4f4f5;letter-spacing:-0.043px;color:#f4f4f5;">Lucravia pullback</div>
<div class="abs" style="left:901.50px;top:663.99px;font-size:11px;line-height:11px;font-weight:400;-webkit-text-stroke:0.32px #f4f4f5;letter-spacing:-0.524px;color:#f4f4f5;">Apex</div>
<div class="abs" style="left:1017.50px;top:663.99px;font-size:11px;line-height:11px;font-weight:400;-webkit-text-stroke:0.32px #f4f4f5;letter-spacing:0.035px;color:#f4f4f5;">500.00</div>
<div class="abs" style="left:1107px;top:661.1px;width:49px;height:14.8px;background:#1d3b2c;border-radius:3px"></div>
<div class="abs" style="left:1125.00px;top:664.58px;font-size:9px;line-height:9px;font-weight:700;letter-spacing:0.121px;color:#86efac;">2.38R</div>
<svg class="abs" style="left:1113px;top:665.1px;" width="9.5" height="7" viewBox="0 0 11 9" fill="none" stroke="#86efac" stroke-width="1.2" stroke-linecap="round" stroke-linejoin="round"><path d="M1 7.5l3-3 2 2 4-3.8"/><path d="M7 2.4h3.2v3.2"/></svg>
<div class="abs" style="left:1219.2px;top:661.9px;width:51.5px;height:14.8px;background:#1d3b2c;border-radius:3px"></div>
<div class="abs" style="left:1225.00px;top:665.08px;font-size:9px;line-height:9px;font-weight:700;letter-spacing:0.316px;color:#86efac;">+1187.50</div>
<div class="abs" style="left:1335.2px;top:660.3px;width:47.7px;height:17.3px;background:#283656;border-radius:3px"></div>
<svg class="abs" style="left:1340.6000000000001px;top:663.9px;" width="10" height="10" viewBox="0 0 24 24" fill="none" stroke="#9dbdf5" stroke-width="1.75" stroke-linecap="round" stroke-linejoin="round"><path d="M2.06 12.35a1 1 0 0 1 0-.7 10.75 10.75 0 0 1 19.88 0 1 1 0 0 1 0 .7 10.75 10.75 0 0 1-19.88 0"/><circle cx="12" cy="12" r="3"/></svg>
<div class="abs" style="left:1353.20px;top:664.78px;font-size:9px;line-height:9px;font-weight:700;letter-spacing:-0.168px;color:#a3c8fb;">Avant</div>
<div class="abs" style="left:1386.2px;top:660.3px;width:49.5px;height:17.3px;background:#20392d;border-radius:3px"></div>
<svg class="abs" style="left:1391.6000000000001px;top:663.9px;" width="10" height="10" viewBox="0 0 24 24" fill="none" stroke="#80e0a2" stroke-width="1.75" stroke-linecap="round" stroke-linejoin="round"><path d="M2.06 12.35a1 1 0 0 1 0-.7 10.75 10.75 0 0 1 19.88 0 1 1 0 0 1 0 .7 10.75 10.75 0 0 1-19.88 0"/><circle cx="12" cy="12" r="3"/></svg>
<div class="abs" style="left:1404.60px;top:664.78px;font-size:9px;line-height:9px;font-weight:700;letter-spacing:-0.026px;color:#86efac;">Après</div>
<svg class="abs" style="left:1527px;top:665.5px;" width="9.5" height="8.5" viewBox="0 0 12 11" fill="none" stroke="#d4d4d8" stroke-width="1" stroke-linecap="round" stroke-linejoin="round"><path d="M8.4 1.3l1.9 1.9-5.9 5.9-2.6.7.7-2.6z" fill="#c4c4c8"/><path d="M4.5 10h6"/></svg>
<svg class="abs" style="left:1551px;top:664.8px;" width="9" height="10" viewBox="0 0 24 26" fill="none" stroke="#c92a2a" stroke-width="2.6" stroke-linecap="round" stroke-linejoin="round"><path d="M3 6.5h18"/><path d="M5.5 6.5l1.3 15.2A2 2 0 0 0 8.8 23.5h6.4a2 2 0 0 0 2-1.8L18.5 6.5"/><path d="M8.5 6.5V5a3.5 3.5 0 0 1 7 0v1.5"/></svg>
<div class="abs" style="left:227px;top:686.5px;width:1384px;height:34px;background:#18191e"></div>
<div class="abs" style="left:227px;top:719.5px;width:1384px;height:1px;background:#3d4452"></div>
<div class="abs" style="left:237.20px;top:697.99px;font-size:11px;line-height:11px;font-weight:400;-webkit-text-stroke:0.32px #f4f4f5;letter-spacing:-0.028px;color:#f4f4f5;">13/01/2026 09:16</div>
<div class="abs" style="left:402.50px;top:697.99px;font-size:11px;line-height:11px;font-weight:400;-webkit-text-stroke:0.32px #f4f4f5;letter-spacing:-0.601px;color:#f4f4f5;">EURUSD</div>
<div class="abs" style="left:526.1px;top:695.1px;width:50.7px;height:15px;background:#3a1e23;border-radius:8px"></div>
<svg class="abs" style="left:533.8px;top:699.1px;" width="9.5" height="7" viewBox="0 0 11 9" fill="none" stroke="#fca5a5" stroke-width="1.2" stroke-linecap="round" stroke-linejoin="round"><path d="M1 2.5l3 3 2-2 4 3.8"/><path d="M7 7.6h3.2V4.4"/></svg>
<div class="abs" style="left:546.10px;top:698.58px;font-size:9px;line-height:9px;font-weight:700;letter-spacing:0.050px;color:#fca5a5;">Short</div>
<div class="abs" style="left:660.50px;top:697.99px;font-size:11px;line-height:11px;font-weight:400;-webkit-text-stroke:0.32px #f4f4f5;letter-spacing:-0.043px;color:#f4f4f5;">Lucravia pullback</div>
<div class="abs" style="left:901.50px;top:697.99px;font-size:11px;line-height:11px;font-weight:400;-webkit-text-stroke:0.32px #f4f4f5;letter-spacing:-0.524px;color:#f4f4f5;">Apex</div>
<div class="abs" style="left:1017.50px;top:697.99px;font-size:11px;line-height:11px;font-weight:400;-webkit-text-stroke:0.32px #f4f4f5;letter-spacing:-0.105px;color:#f4f4f5;">375.00</div>
<div class="abs" style="left:1107px;top:695.1px;width:52px;height:14.8px;background:#3a1e23;border-radius:3px"></div>
<div class="abs" style="left:1125.00px;top:698.58px;font-size:9px;line-height:9px;font-weight:700;letter-spacing:0.097px;color:#fca5a5;">-1.00R</div>
<svg class="abs" style="left:1113px;top:699.1px;" width="9.5" height="7" viewBox="0 0 11 9" fill="none" stroke="#fca5a5" stroke-width="1.2" stroke-linecap="round" stroke-linejoin="round"><path d="M1 2.5l3 3 2-2 4 3.8"/><path d="M7 7.6h3.2V4.4"/></svg>
<div class="abs" style="left:1219.2px;top:695.9px;width:47px;height:14.8px;background:#3a1e23;border-radius:3px"></div>
<div class="abs" style="left:1225.00px;top:699.08px;font-size:9px;line-height:9px;font-weight:700;letter-spacing:0.747px;color:#fca5a5;">-375.00</div>
<div class="abs" style="left:1335.2px;top:694.3px;width:47.7px;height:17.3px;background:#1d2844;border-radius:3px"></div>
<svg class="abs" style="left:1340.6000000000001px;top:697.9px;" width="10" height="10" viewBox="0 0 24 24" fill="none" stroke="#9dbdf5" stroke-width="1.75" stroke-linecap="round" stroke-linejoin="round"><path d="M2.06 12.35a1 1 0 0 1 0-.7 10.75 10.75 0 0 1 19.88 0 1 1 0 0 1 0 .7 10.75 10.75 0 0 1-19.88 0"/><circle cx="12" cy="12" r="3"/></svg>
<div class="abs" style="left:1353.20px;top:698.78px;font-size:9px;line-height:9px;font-weight:700;letter-spacing:-0.168px;color:#a3c8fb;">Avant</div>
<div class="abs" style="left:1386.2px;top:694.3px;width:49.5px;height:17.3px;background:#172a20;border-radius:3px"></div>
<svg class="abs" style="left:1391.6000000000001px;top:697.9px;" width="10" height="10" viewBox="0 0 24 24" fill="none" stroke="#80e0a2" stroke-width="1.75" stroke-linecap="round" stroke-linejoin="round"><path d="M2.06 12.35a1 1 0 0 1 0-.7 10.75 10.75 0 0 1 19.88 0 1 1 0 0 1 0 .7 10.75 10.75 0 0 1-19.88 0"/><circle cx="12" cy="12" r="3"/></svg>
<div class="abs" style="left:1404.60px;top:698.78px;font-size:9px;line-height:9px;font-weight:700;letter-spacing:-0.026px;color:#86efac;">Après</div>
<svg class="abs" style="left:1527px;top:699.5px;" width="9.5" height="8.5" viewBox="0 0 12 11" fill="none" stroke="#d4d4d8" stroke-width="1" stroke-linecap="round" stroke-linejoin="round"><path d="M8.4 1.3l1.9 1.9-5.9 5.9-2.6.7.7-2.6z" fill="#c4c4c8"/><path d="M4.5 10h6"/></svg>
<svg class="abs" style="left:1551px;top:698.8px;" width="9" height="10" viewBox="0 0 24 26" fill="none" stroke="#c92a2a" stroke-width="2.6" stroke-linecap="round" stroke-linejoin="round"><path d="M3 6.5h18"/><path d="M5.5 6.5l1.3 15.2A2 2 0 0 0 8.8 23.5h6.4a2 2 0 0 0 2-1.8L18.5 6.5"/><path d="M8.5 6.5V5a3.5 3.5 0 0 1 7 0v1.5"/></svg>
<div class="abs" style="left:227px;top:720.5px;width:1384px;height:34px;background:#2e3139"></div>
<div class="abs" style="left:227px;top:753.5px;width:1384px;height:1px;background:#3d4452"></div>
<div class="abs" style="left:237.20px;top:731.99px;font-size:11px;line-height:11px;font-weight:400;-webkit-text-stroke:0.32px #f4f4f5;letter-spacing:0.026px;color:#f4f4f5;">09/01/2026 09:11</div>
<div class="abs" style="left:402.50px;top:731.99px;font-size:11px;line-height:11px;font-weight:400;-webkit-text-stroke:0.32px #f4f4f5;letter-spacing:-0.601px;color:#f4f4f5;">EURUSD</div>
<div class="abs" style="left:526.1px;top:729.1px;width:50.7px;height:15px;background:#4a2b31;border-radius:8px"></div>
<svg class="abs" style="left:533.8px;top:733.1px;" width="9.5" height="7" viewBox="0 0 11 9" fill="none" stroke="#fca5a5" stroke-width="1.2" stroke-linecap="round" stroke-linejoin="round"><path d="M1 2.5l3 3 2-2 4 3.8"/><path d="M7 7.6h3.2V4.4"/></svg>
<div class="abs" style="left:546.10px;top:732.58px;font-size:9px;line-height:9px;font-weight:700;letter-spacing:0.050px;color:#fca5a5;">Short</div>
<div class="abs" style="left:660.50px;top:731.99px;font-size:11px;line-height:11px;font-weight:400;-webkit-text-stroke:0.32px #f4f4f5;letter-spacing:0.000px;color:#f4f4f5;">lucravia flip v1.0</div>
<div class="abs" style="left:901.50px;top:731.99px;font-size:11px;line-height:11px;font-weight:400;-webkit-text-stroke:0.32px #f4f4f5;letter-spacing:-0.524px;color:#f4f4f5;">Apex</div>
<div class="abs" style="left:1017.50px;top:731.99px;font-size:11px;line-height:11px;font-weight:400;-webkit-text-stroke:0.32px #f4f4f5;letter-spacing:-0.105px;color:#f4f4f5;">375.00</div>
<div class="abs" style="left:1107px;top:729.1px;width:52px;height:14.8px;background:#4a2b31;border-radius:3px"></div>
<div class="abs" style="left:1125.00px;top:732.58px;font-size:9px;line-height:9px;font-weight:700;letter-spacing:0.097px;color:#fca5a5;">-1.00R</div>
<svg class="abs" style="left:1113px;top:733.1px;" width="9.5" height="7" viewBox="0 0 11 9" fill="none" stroke="#fca5a5" stroke-width="1.2" stroke-linecap="round" stroke-linejoin="round"><path d="M1 2.5l3 3 2-2 4 3.8"/><path d="M7 7.6h3.2V4.4"/></svg>
<div class="abs" style="left:1219.2px;top:729.9px;width:47px;height:14.8px;background:#4a2b31;border-radius:3px"></div>
<div class="abs" style="left:1225.00px;top:733.08px;font-size:9px;line-height:9px;font-weight:700;letter-spacing:0.747px;color:#fca5a5;">-375.00</div>
<div class="abs" style="left:1335.2px;top:728.3px;width:47.7px;height:17.3px;background:#283656;border-radius:3px"></div>
<svg class="abs" style="left:1340.6000000000001px;top:731.9px;" width="10" height="10" viewBox="0 0 24 24" fill="none" stroke="#9dbdf5" stroke-width="1.75" stroke-linecap="round" stroke-linejoin="round"><path d="M2.06 12.35a1 1 0 0 1 0-.7 10.75 10.75 0 0 1 19.88 0 1 1 0 0 1 0 .7 10.75 10.75 0 0 1-19.88 0"/><circle cx="12" cy="12" r="3"/></svg>
<div class="abs" style="left:1353.20px;top:732.78px;font-size:9px;line-height:9px;font-weight:700;letter-spacing:-0.168px;color:#a3c8fb;">Avant</div>
<div class="abs" style="left:1386.2px;top:728.3px;width:49.5px;height:17.3px;background:#20392d;border-radius:3px"></div>
<svg class="abs" style="left:1391.6000000000001px;top:731.9px;" width="10" height="10" viewBox="0 0 24 24" fill="none" stroke="#80e0a2" stroke-width="1.75" stroke-linecap="round" stroke-linejoin="round"><path d="M2.06 12.35a1 1 0 0 1 0-.7 10.75 10.75 0 0 1 19.88 0 1 1 0 0 1 0 .7 10.75 10.75 0 0 1-19.88 0"/><circle cx="12" cy="12" r="3"/></svg>
<div class="abs" style="left:1404.60px;top:732.78px;font-size:9px;line-height:9px;font-weight:700;letter-spacing:-0.026px;color:#86efac;">Après</div>
<svg class="abs" style="left:1527px;top:733.5px;" width="9.5" height="8.5" viewBox="0 0 12 11" fill="none" stroke="#d4d4d8" stroke-width="1" stroke-linecap="round" stroke-linejoin="round"><path d="M8.4 1.3l1.9 1.9-5.9 5.9-2.6.7.7-2.6z" fill="#c4c4c8"/><path d="M4.5 10h6"/></svg>
<svg class="abs" style="left:1551px;top:732.8px;" width="9" height="10" viewBox="0 0 24 26" fill="none" stroke="#c92a2a" stroke-width="2.6" stroke-linecap="round" stroke-linejoin="round"><path d="M3 6.5h18"/><path d="M5.5 6.5l1.3 15.2A2 2 0 0 0 8.8 23.5h6.4a2 2 0 0 0 2-1.8L18.5 6.5"/><path d="M8.5 6.5V5a3.5 3.5 0 0 1 7 0v1.5"/></svg>
<div class="abs" style="left:227px;top:754.5px;width:1384px;height:34px;background:#18191e"></div>
<div class="abs" style="left:227px;top:787.5px;width:1384px;height:1px;background:#3d4452"></div>
<div class="abs" style="left:237.20px;top:765.99px;font-size:11px;line-height:11px;font-weight:400;-webkit-text-stroke:0.32px #f4f4f5;letter-spacing:-0.028px;color:#f4f4f5;">09/01/2026 08:20</div>
<div class="abs" style="left:402.50px;top:765.99px;font-size:11px;line-height:11px;font-weight:400;-webkit-text-stroke:0.32px #f4f4f5;letter-spacing:-0.601px;color:#f4f4f5;">EURUSD</div>
<div class="abs" style="left:526.1px;top:763.1px;width:50.7px;height:15px;background:#3a1e23;border-radius:8px"></div>
<svg class="abs" style="left:533.8px;top:767.1px;" width="9.5" height="7" viewBox="0 0 11 9" fill="none" stroke="#fca5a5" stroke-width="1.2" stroke-linecap="round" stroke-linejoin="round"><path d="M1 2.5l3 3 2-2 4 3.8"/><path d="M7 7.6h3.2V4.4"/></svg>
<div class="abs" style="left:546.10px;top:766.58px;font-size:9px;line-height:9px;font-weight:700;letter-spacing:0.050px;color:#fca5a5;">Short</div>
<div class="abs" style="left:660.50px;top:765.99px;font-size:11px;line-height:11px;font-weight:400;-webkit-text-stroke:0.32px #f4f4f5;letter-spacing:-0.104px;color:#f4f4f5;">LucraVia Cloud Scalper v2.0</div>
<div class="abs" style="left:901.50px;top:765.99px;font-size:11px;line-height:11px;font-weight:400;-webkit-text-stroke:0.32px #f4f4f5;letter-spacing:-0.141px;color:#f4f4f5;">TopStep</div>
<div class="abs" style="left:1017.50px;top:765.99px;font-size:11px;line-height:11px;font-weight:400;-webkit-text-stroke:0.32px #f4f4f5;letter-spacing:-0.465px;color:#f4f4f5;">218.75</div>
<div class="abs" style="left:1107px;top:763.1px;width:52px;height:14.8px;background:#3a1e23;border-radius:3px"></div>
<div class="abs" style="left:1125.00px;top:766.58px;font-size:9px;line-height:9px;font-weight:700;letter-spacing:0.097px;color:#fca5a5;">-1.00R</div>
<svg class="abs" style="left:1113px;top:767.1px;" width="9.5" height="7" viewBox="0 0 11 9" fill="none" stroke="#fca5a5" stroke-width="1.2" stroke-linecap="round" stroke-linejoin="round"><path d="M1 2.5l3 3 2-2 4 3.8"/><path d="M7 7.6h3.2V4.4"/></svg>
<div class="abs" style="left:1219.2px;top:763.9px;width:44.5px;height:14.8px;background:#3a1e23;border-radius:3px"></div>
<div class="abs" style="left:1225.00px;top:767.08px;font-size:9px;line-height:9px;font-weight:700;letter-spacing:0.330px;color:#fca5a5;">-218.75</div>
<div class="abs" style="left:1335.2px;top:762.3px;width:47.7px;height:17.3px;background:#1d2844;border-radius:3px"></div>
<svg class="abs" style="left:1340.6000000000001px;top:765.9px;" width="10" height="10" viewBox="0 0 24 24" fill="none" stroke="#9dbdf5" stroke-width="1.75" stroke-linecap="round" stroke-linejoin="round"><path d="M2.06 12.35a1 1 0 0 1 0-.7 10.75 10.75 0 0 1 19.88 0 1 1 0 0 1 0 .7 10.75 10.75 0 0 1-19.88 0"/><circle cx="12" cy="12" r="3"/></svg>
<div class="abs" style="left:1353.20px;top:766.78px;font-size:9px;line-height:9px;font-weight:700;letter-spacing:-0.168px;color:#a3c8fb;">Avant</div>
<div class="abs" style="left:1386.2px;top:762.3px;width:49.5px;height:17.3px;background:#172a20;border-radius:3px"></div>
<svg class="abs" style="left:1391.6000000000001px;top:765.9px;" width="10" height="10" viewBox="0 0 24 24" fill="none" stroke="#80e0a2" stroke-width="1.75" stroke-linecap="round" stroke-linejoin="round"><path d="M2.06 12.35a1 1 0 0 1 0-.7 10.75 10.75 0 0 1 19.88 0 1 1 0 0 1 0 .7 10.75 10.75 0 0 1-19.88 0"/><circle cx="12" cy="12" r="3"/></svg>
<div class="abs" style="left:1404.60px;top:766.78px;font-size:9px;line-height:9px;font-weight:700;letter-spacing:-0.026px;color:#86efac;">Après</div>
<svg class="abs" style="left:1527px;top:767.5px;" width="9.5" height="8.5" viewBox="0 0 12 11" fill="none" stroke="#d4d4d8" stroke-width="1" stroke-linecap="round" stroke-linejoin="round"><path d="M8.4 1.3l1.9 1.9-5.9 5.9-2.6.7.7-2.6z" fill="#c4c4c8"/><path d="M4.5 10h6"/></svg>
<svg class="abs" style="left:1551px;top:766.8px;" width="9" height="10" viewBox="0 0 24 26" fill="none" stroke="#c92a2a" stroke-width="2.6" stroke-linecap="round" stroke-linejoin="round"><path d="M3 6.5h18"/><path d="M5.5 6.5l1.3 15.2A2 2 0 0 0 8.8 23.5h6.4a2 2 0 0 0 2-1.8L18.5 6.5"/><path d="M8.5 6.5V5a3.5 3.5 0 0 1 7 0v1.5"/></svg>
<div class="abs" style="left:227px;top:448.5px;width:1.2px;height:340px;background:#3d4452"></div>
<div class="abs" style="left:1609.8px;top:448.5px;width:1.2px;height:340px;background:#3d4452"></div>
<div class="abs" style="left:227px;top:788.5px;width:1384px;height:1px;background:#3d4452"></div>
<div class="abs" style="left:245.20px;top:808.01px;font-size:10.5px;line-height:10.5px;font-weight:700;letter-spacing:-0.186px;color:#f4f4f5;">Affichage de 1 à 10 sur 14 résultats</div>
<div class="abs" style="left:1251.70px;top:801.41px;font-size:10.5px;line-height:10.5px;font-weight:400;-webkit-text-stroke:0.32px #f4f4f5;letter-spacing:-0.003px;color:#f4f4f5;">Éléments</div>
<div class="abs" style="left:1251.70px;top:816.01px;font-size:10.5px;line-height:10.5px;font-weight:400;-webkit-text-stroke:0.32px #f4f4f5;letter-spacing:0.256px;color:#f4f4f5;">par page:</div>
<div class="abs" style="left:1317.3px;top:803px;width:153.2px;height:23.5px;background:#18191e;border-radius:5px"></div>
<div class="abs" style="left:1329.00px;top:809.91px;font-size:10.5px;line-height:10.5px;font-weight:400;-webkit-text-stroke:0.32px #f4f4f5;letter-spacing:0.009px;color:#f4f4f5;">10 par page</div>
<svg class="abs" style="left:1457.5px;top:810.5px;" width="10.5" height="7" viewBox="0 0 11 7" fill="none" stroke="#fff" stroke-width="1.8" stroke-linecap="round" stroke-linejoin="round"><path d="M1.5 1.5 5.5 5.5 9.5 1.5"/></svg>
<div class="abs" style="left:1483.4px;top:802.4px;width:109.2px;height:23.2px;background:#18191e;border:1px solid #3a4150;border-radius:5px"></div>
<div class="abs" style="left:1483.9px;top:802.9px;width:31px;height:22.2px;background:#1f2129;border-radius:4px 0 0 4px"></div>
<div class="abs" style="left:1514.9px;top:802.4px;width:21px;height:23.2px;background:#f8f9fb"></div>
<div class="abs" style="left:1560.5px;top:802.4px;width:1px;height:23.2px;background:#3a4150"></div>
<svg class="abs" style="left:1495px;top:810px;" width="7" height="8" viewBox="0 0 7 8" fill="none" stroke="#71757e" stroke-width="1.1" stroke-linecap="round" stroke-linejoin="round"><path d="M4.8 1.2 2 4l2.8 2.8"/></svg>
<svg class="abs" style="left:1573px;top:810px;" width="7" height="8" viewBox="0 0 7 8" fill="none" stroke="#a1a1aa" stroke-width="1.1" stroke-linecap="round" stroke-linejoin="round"><path d="M2.2 1.2 5 4 2.2 6.8"/></svg>
<div class="abs" style="left:1522.40px;top:810.03px;font-size:10px;line-height:10px;font-weight:400;-webkit-text-stroke:0.32px #3a4150;letter-spacing:0.000px;color:#3a4150;">1</div>
<div class="abs" style="left:1545.30px;top:810.03px;font-size:10px;line-height:10px;font-weight:700;letter-spacing:0.000px;color:#fff;">2</div>
</div></body></html>
